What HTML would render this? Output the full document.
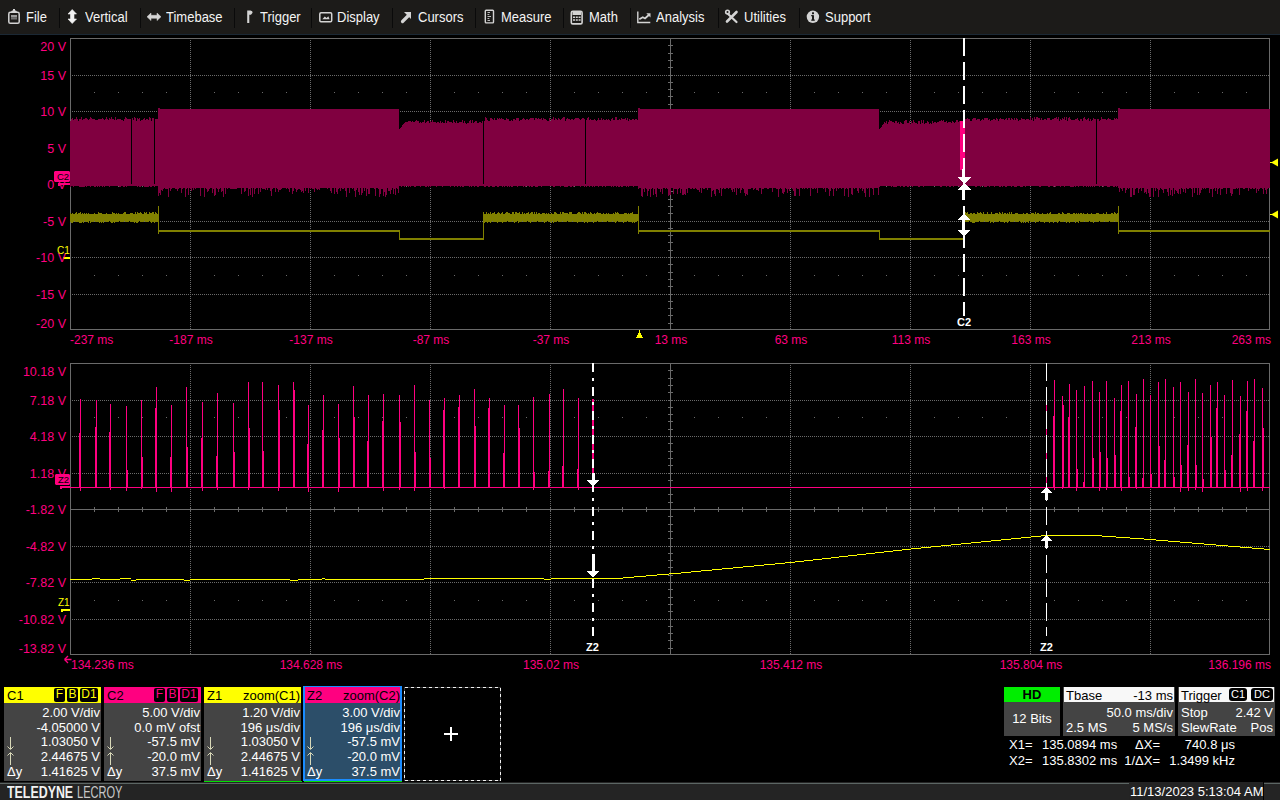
<!DOCTYPE html>
<html><head><meta charset="utf-8"><style>
html,body{margin:0;padding:0;width:1280px;height:800px;overflow:hidden;background:#000;font-family:"Liberation Sans", sans-serif;}
div{font-family:"Liberation Sans", sans-serif;}
</style></head><body>
<div style="position:absolute;left:0;top:0;width:1280px;height:34px;background:#1c1b19"></div><div style="position:absolute;left:0;top:34px;width:1280px;height:1px;background:#1b2834"></div><div style="position:absolute;left:59px;top:8px;width:1px;height:20px;background:#0a0a0a"></div><div style="position:absolute;left:140px;top:8px;width:1px;height:20px;background:#0a0a0a"></div><div style="position:absolute;left:234px;top:8px;width:1px;height:20px;background:#0a0a0a"></div><div style="position:absolute;left:311px;top:8px;width:1px;height:20px;background:#0a0a0a"></div><div style="position:absolute;left:392px;top:8px;width:1px;height:20px;background:#0a0a0a"></div><div style="position:absolute;left:475px;top:8px;width:1px;height:20px;background:#0a0a0a"></div><div style="position:absolute;left:563px;top:8px;width:1px;height:20px;background:#0a0a0a"></div><div style="position:absolute;left:630px;top:8px;width:1px;height:20px;background:#0a0a0a"></div><div style="position:absolute;left:718px;top:8px;width:1px;height:20px;background:#0a0a0a"></div><div style="position:absolute;left:799px;top:8px;width:1px;height:20px;background:#0a0a0a"></div><div style="position:absolute;left:26px;top:10px;font-size:13px;line-height:14px;color:#f4f4f4;transform:scaleY(1.1);transform-origin:0 1px">File</div><div style="position:absolute;left:85px;top:10px;font-size:13px;line-height:14px;color:#f4f4f4;transform:scaleY(1.1);transform-origin:0 1px">Vertical</div><div style="position:absolute;left:166px;top:10px;font-size:13px;line-height:14px;color:#f4f4f4;transform:scaleY(1.1);transform-origin:0 1px">Timebase</div><div style="position:absolute;left:260px;top:10px;font-size:13px;line-height:14px;color:#f4f4f4;transform:scaleY(1.1);transform-origin:0 1px">Trigger</div><div style="position:absolute;left:337px;top:10px;font-size:13px;line-height:14px;color:#f4f4f4;transform:scaleY(1.1);transform-origin:0 1px">Display</div><div style="position:absolute;left:418px;top:10px;font-size:13px;line-height:14px;color:#f4f4f4;transform:scaleY(1.1);transform-origin:0 1px">Cursors</div><div style="position:absolute;left:501px;top:10px;font-size:13px;line-height:14px;color:#f4f4f4;transform:scaleY(1.1);transform-origin:0 1px">Measure</div><div style="position:absolute;left:589px;top:10px;font-size:13px;line-height:14px;color:#f4f4f4;transform:scaleY(1.1);transform-origin:0 1px">Math</div><div style="position:absolute;left:656px;top:10px;font-size:13px;line-height:14px;color:#f4f4f4;transform:scaleY(1.1);transform-origin:0 1px">Analysis</div><div style="position:absolute;left:744px;top:10px;font-size:13px;line-height:14px;color:#f4f4f4;transform:scaleY(1.1);transform-origin:0 1px">Utilities</div><div style="position:absolute;left:825px;top:10px;font-size:13px;line-height:14px;color:#f4f4f4;transform:scaleY(1.1);transform-origin:0 1px">Support</div>

<svg width="900" height="34" style="position:absolute;left:0;top:0">
 <rect x="8.8" y="12.3" width="10.4" height="11" rx="1.6" fill="none" stroke="#d4d4d4" stroke-width="1.5"/>
 <path d="M10.5 12.5L12 10.5H13V9H15V10.5H16L17.5 12.5Z" fill="#d4d4d4"/>
 <rect x="11" y="15" width="6" height="2.5" fill="#9a9a9a"/>
 <rect x="11" y="17.5" width="6" height="2" fill="#707070"/>
 <path d="M72.2 9.5L76.5 14H74V19H76.5L72.2 23.5L68 19H70.5V14H68Z" fill="#f2f2f2" stroke="#f2f2f2" stroke-width="0.6" stroke-linejoin="round"/>
 <path d="M147 16.8L151 13V15.3H157V13L161 16.8L157 20.6V18.3H151V20.6Z" fill="#d4d4d4" stroke="#d4d4d4" stroke-width="0.5" stroke-linejoin="round"/>
 <path d="M247.2 10.5H250.5Q252.8 10.8 252.6 12.8L251 14.8H249.3V23H247.2Z" fill="#d4d4d4"/>
 <rect x="319.8" y="12.8" width="11.9" height="8.9" rx="1.2" fill="none" stroke="#d4d4d4" stroke-width="1.5"/>
 <path d="M322.3 19.3L324.8 16.6L326.6 18L328.3 16.3L329.6 19.3Z" fill="#d4d4d4"/>
 <path d="M402.5 21.5L408 16" stroke="#d4d4d4" stroke-width="3.2" stroke-linecap="round"/>
 <path d="M404 12H411V19Z" fill="#d4d4d4"/>
 <rect x="485.3" y="10.3" width="8.2" height="12.6" rx="0.8" fill="none" stroke="#d4d4d4" stroke-width="1.4"/>
 <path d="M487.5 12.5h2.5M487.5 14.5h1.8M487.5 16.5h3.5M487.5 18.5h1.8M487.5 20.5h2.5" stroke="#bdbdbd" stroke-width="1"/>
 <rect x="571.3" y="11.3" width="10.8" height="12.6" rx="1.5" fill="none" stroke="#d4d4d4" stroke-width="1.6"/>
 <rect x="572.5" y="12" width="8.5" height="3" fill="#d4d4d4"/>
 <path d="M573 16.5h2v1.6h-2zM575.8 16.5h2v1.6h-2zM578.6 16.5h2v1.6h-2zM573 19.2h2v1.6h-2zM575.8 19.2h2v1.6h-2zM578.6 19.2h2v1.6h-2z" fill="#d4d4d4"/>
 <path d="M637.8 11.5v11h12.5" fill="none" stroke="#d4d4d4" stroke-width="1.4"/>
 <path d="M639.3 19.3L642.8 17.3L645 18.5L648.8 15" fill="none" stroke="#d4d4d4" stroke-width="1.8"/>
 <path d="M646.3 13.3H650.5V17.5Z" fill="#d4d4d4"/>
 <path d="M727 21.5L736.5 12" stroke="#d4d4d4" stroke-width="2.6" stroke-linecap="round"/>
 <path d="M726.5 12.5L736.5 22" stroke="#d4d4d4" stroke-width="2.2" stroke-linecap="round"/>
 <circle cx="727.5" cy="12" r="2.6" fill="#d4d4d4"/>
 <circle cx="727.5" cy="12" r="1" fill="#1c1b19"/>
 <circle cx="812.9" cy="16.8" r="6.2" fill="#d4d4d4"/>
 <rect x="812" y="15.2" width="2" height="5.3" fill="#1c1b19"/>
 <rect x="811" y="15.2" width="2" height="1" fill="#1c1b19"/>
 <rect x="811" y="19.6" width="4" height="1" fill="#1c1b19"/>
 <rect x="812" y="12.3" width="2" height="1.9" fill="#1c1b19"/>
</svg>
<svg width="1280" height="800" style="position:absolute;left:0;top:0" shape-rendering="crispEdges"><rect x="70.5" y="38.5" width="1199" height="291" fill="none" stroke="#6a6a6a" stroke-width="1"/>
<line x1="190.5" y1="40" x2="190.5" y2="329" stroke="#6a6a6a" stroke-dasharray="1 1"/>
<line x1="310.5" y1="40" x2="310.5" y2="329" stroke="#6a6a6a" stroke-dasharray="1 1"/>
<line x1="430.5" y1="40" x2="430.5" y2="329" stroke="#6a6a6a" stroke-dasharray="1 1"/>
<line x1="550.5" y1="40" x2="550.5" y2="329" stroke="#6a6a6a" stroke-dasharray="1 1"/>
<line x1="790.5" y1="40" x2="790.5" y2="329" stroke="#6a6a6a" stroke-dasharray="1 1"/>
<line x1="910.5" y1="40" x2="910.5" y2="329" stroke="#6a6a6a" stroke-dasharray="1 1"/>
<line x1="1030.5" y1="40" x2="1030.5" y2="329" stroke="#6a6a6a" stroke-dasharray="1 1"/>
<line x1="1150.5" y1="40" x2="1150.5" y2="329" stroke="#6a6a6a" stroke-dasharray="1 1"/>
<line x1="72" y1="38.5" x2="1269" y2="38.5" stroke="#6a6a6a" stroke-dasharray="1 1"/>
<line x1="72" y1="75.5" x2="1269" y2="75.5" stroke="#6a6a6a" stroke-dasharray="1 1"/>
<line x1="72" y1="111.5" x2="1269" y2="111.5" stroke="#6a6a6a" stroke-dasharray="1 1"/>
<line x1="72" y1="148.5" x2="1269" y2="148.5" stroke="#6a6a6a" stroke-dasharray="1 1"/>
<line x1="72" y1="221.5" x2="1269" y2="221.5" stroke="#6a6a6a" stroke-dasharray="1 1"/>
<line x1="72" y1="257.5" x2="1269" y2="257.5" stroke="#6a6a6a" stroke-dasharray="1 1"/>
<line x1="72" y1="294.5" x2="1269" y2="294.5" stroke="#6a6a6a" stroke-dasharray="1 1"/>
<line x1="72" y1="329.5" x2="1269" y2="329.5" stroke="#6a6a6a" stroke-dasharray="1 1"/>
<path d="M94 92h1v1h-1zM118 92h1v1h-1zM142 92h1v1h-1zM166 92h1v1h-1zM214 92h1v1h-1zM238 92h1v1h-1zM262 92h1v1h-1zM286 92h1v1h-1zM334 92h1v1h-1zM358 92h1v1h-1zM382 92h1v1h-1zM406 92h1v1h-1zM454 92h1v1h-1zM478 92h1v1h-1zM502 92h1v1h-1zM526 92h1v1h-1zM574 92h1v1h-1zM598 92h1v1h-1zM622 92h1v1h-1zM646 92h1v1h-1zM694 92h1v1h-1zM718 92h1v1h-1zM742 92h1v1h-1zM766 92h1v1h-1zM814 92h1v1h-1zM838 92h1v1h-1zM862 92h1v1h-1zM886 92h1v1h-1zM934 92h1v1h-1zM958 92h1v1h-1zM982 92h1v1h-1zM1006 92h1v1h-1zM1054 92h1v1h-1zM1078 92h1v1h-1zM1102 92h1v1h-1zM1126 92h1v1h-1zM1174 92h1v1h-1zM1198 92h1v1h-1zM1222 92h1v1h-1zM1246 92h1v1h-1z" fill="#6a6a6a"/>
<path d="M94 275h1v1h-1zM118 275h1v1h-1zM142 275h1v1h-1zM166 275h1v1h-1zM214 275h1v1h-1zM238 275h1v1h-1zM262 275h1v1h-1zM286 275h1v1h-1zM334 275h1v1h-1zM358 275h1v1h-1zM382 275h1v1h-1zM406 275h1v1h-1zM454 275h1v1h-1zM478 275h1v1h-1zM502 275h1v1h-1zM526 275h1v1h-1zM574 275h1v1h-1zM598 275h1v1h-1zM622 275h1v1h-1zM646 275h1v1h-1zM694 275h1v1h-1zM718 275h1v1h-1zM742 275h1v1h-1zM766 275h1v1h-1zM814 275h1v1h-1zM838 275h1v1h-1zM862 275h1v1h-1zM886 275h1v1h-1zM934 275h1v1h-1zM958 275h1v1h-1zM982 275h1v1h-1zM1006 275h1v1h-1zM1054 275h1v1h-1zM1078 275h1v1h-1zM1102 275h1v1h-1zM1126 275h1v1h-1zM1174 275h1v1h-1zM1198 275h1v1h-1zM1222 275h1v1h-1zM1246 275h1v1h-1z" fill="#6a6a6a"/>
<rect x="670" y="38" width="1" height="291" fill="#6a6a6a"/>
<path d="M668 45h5v1h-5zM668 53h5v1h-5zM668 60h5v1h-5zM668 67h5v1h-5zM668 75h5v1h-5zM668 82h5v1h-5zM668 89h5v1h-5zM668 96h5v1h-5zM668 104h5v1h-5zM668 111h5v1h-5zM668 118h5v1h-5zM668 126h5v1h-5zM668 133h5v1h-5zM668 140h5v1h-5zM668 148h5v1h-5zM668 155h5v1h-5zM668 162h5v1h-5zM668 169h5v1h-5zM668 177h5v1h-5zM668 184h5v1h-5zM668 191h5v1h-5zM668 199h5v1h-5zM668 206h5v1h-5zM668 213h5v1h-5zM668 221h5v1h-5zM668 228h5v1h-5zM668 235h5v1h-5zM668 242h5v1h-5zM668 250h5v1h-5zM668 257h5v1h-5zM668 264h5v1h-5zM668 272h5v1h-5zM668 279h5v1h-5zM668 286h5v1h-5zM668 294h5v1h-5zM668 301h5v1h-5zM668 308h5v1h-5zM668 315h5v1h-5zM668 323h5v1h-5z" fill="#6a6a6a"/>
<rect x="70" y="184" width="1199" height="1" fill="#6a6a6a"/>
<path d="M94 182h1v5h-1zM118 182h1v5h-1zM142 182h1v5h-1zM166 182h1v5h-1zM190 182h1v5h-1zM214 182h1v5h-1zM238 182h1v5h-1zM262 182h1v5h-1zM286 182h1v5h-1zM310 182h1v5h-1zM334 182h1v5h-1zM358 182h1v5h-1zM382 182h1v5h-1zM406 182h1v5h-1zM430 182h1v5h-1zM454 182h1v5h-1zM478 182h1v5h-1zM502 182h1v5h-1zM526 182h1v5h-1zM550 182h1v5h-1zM574 182h1v5h-1zM598 182h1v5h-1zM622 182h1v5h-1zM646 182h1v5h-1zM670 182h1v5h-1zM694 182h1v5h-1zM718 182h1v5h-1zM742 182h1v5h-1zM766 182h1v5h-1zM790 182h1v5h-1zM814 182h1v5h-1zM838 182h1v5h-1zM862 182h1v5h-1zM886 182h1v5h-1zM910 182h1v5h-1zM934 182h1v5h-1zM958 182h1v5h-1zM982 182h1v5h-1zM1006 182h1v5h-1zM1030 182h1v5h-1zM1054 182h1v5h-1zM1078 182h1v5h-1zM1102 182h1v5h-1zM1126 182h1v5h-1zM1150 182h1v5h-1zM1174 182h1v5h-1zM1198 182h1v5h-1zM1222 182h1v5h-1zM1246 182h1v5h-1z" fill="#6a6a6a"/>
<rect x="70.5" y="363.5" width="1199" height="291" fill="none" stroke="#6a6a6a" stroke-width="1"/>
<line x1="190.5" y1="365" x2="190.5" y2="654" stroke="#6a6a6a" stroke-dasharray="1 1"/>
<line x1="310.5" y1="365" x2="310.5" y2="654" stroke="#6a6a6a" stroke-dasharray="1 1"/>
<line x1="430.5" y1="365" x2="430.5" y2="654" stroke="#6a6a6a" stroke-dasharray="1 1"/>
<line x1="550.5" y1="365" x2="550.5" y2="654" stroke="#6a6a6a" stroke-dasharray="1 1"/>
<line x1="790.5" y1="365" x2="790.5" y2="654" stroke="#6a6a6a" stroke-dasharray="1 1"/>
<line x1="910.5" y1="365" x2="910.5" y2="654" stroke="#6a6a6a" stroke-dasharray="1 1"/>
<line x1="1030.5" y1="365" x2="1030.5" y2="654" stroke="#6a6a6a" stroke-dasharray="1 1"/>
<line x1="1150.5" y1="365" x2="1150.5" y2="654" stroke="#6a6a6a" stroke-dasharray="1 1"/>
<line x1="72" y1="363.5" x2="1269" y2="363.5" stroke="#6a6a6a" stroke-dasharray="1 1"/>
<line x1="72" y1="400.5" x2="1269" y2="400.5" stroke="#6a6a6a" stroke-dasharray="1 1"/>
<line x1="72" y1="436.5" x2="1269" y2="436.5" stroke="#6a6a6a" stroke-dasharray="1 1"/>
<line x1="72" y1="473.5" x2="1269" y2="473.5" stroke="#6a6a6a" stroke-dasharray="1 1"/>
<line x1="72" y1="546.5" x2="1269" y2="546.5" stroke="#6a6a6a" stroke-dasharray="1 1"/>
<line x1="72" y1="582.5" x2="1269" y2="582.5" stroke="#6a6a6a" stroke-dasharray="1 1"/>
<line x1="72" y1="619.5" x2="1269" y2="619.5" stroke="#6a6a6a" stroke-dasharray="1 1"/>
<line x1="72" y1="654.5" x2="1269" y2="654.5" stroke="#6a6a6a" stroke-dasharray="1 1"/>
<path d="M94 417h1v1h-1zM118 417h1v1h-1zM142 417h1v1h-1zM166 417h1v1h-1zM214 417h1v1h-1zM238 417h1v1h-1zM262 417h1v1h-1zM286 417h1v1h-1zM334 417h1v1h-1zM358 417h1v1h-1zM382 417h1v1h-1zM406 417h1v1h-1zM454 417h1v1h-1zM478 417h1v1h-1zM502 417h1v1h-1zM526 417h1v1h-1zM574 417h1v1h-1zM598 417h1v1h-1zM622 417h1v1h-1zM646 417h1v1h-1zM694 417h1v1h-1zM718 417h1v1h-1zM742 417h1v1h-1zM766 417h1v1h-1zM814 417h1v1h-1zM838 417h1v1h-1zM862 417h1v1h-1zM886 417h1v1h-1zM934 417h1v1h-1zM958 417h1v1h-1zM982 417h1v1h-1zM1006 417h1v1h-1zM1054 417h1v1h-1zM1078 417h1v1h-1zM1102 417h1v1h-1zM1126 417h1v1h-1zM1174 417h1v1h-1zM1198 417h1v1h-1zM1222 417h1v1h-1zM1246 417h1v1h-1z" fill="#6a6a6a"/>
<path d="M94 600h1v1h-1zM118 600h1v1h-1zM142 600h1v1h-1zM166 600h1v1h-1zM214 600h1v1h-1zM238 600h1v1h-1zM262 600h1v1h-1zM286 600h1v1h-1zM334 600h1v1h-1zM358 600h1v1h-1zM382 600h1v1h-1zM406 600h1v1h-1zM454 600h1v1h-1zM478 600h1v1h-1zM502 600h1v1h-1zM526 600h1v1h-1zM574 600h1v1h-1zM598 600h1v1h-1zM622 600h1v1h-1zM646 600h1v1h-1zM694 600h1v1h-1zM718 600h1v1h-1zM742 600h1v1h-1zM766 600h1v1h-1zM814 600h1v1h-1zM838 600h1v1h-1zM862 600h1v1h-1zM886 600h1v1h-1zM934 600h1v1h-1zM958 600h1v1h-1zM982 600h1v1h-1zM1006 600h1v1h-1zM1054 600h1v1h-1zM1078 600h1v1h-1zM1102 600h1v1h-1zM1126 600h1v1h-1zM1174 600h1v1h-1zM1198 600h1v1h-1zM1222 600h1v1h-1zM1246 600h1v1h-1z" fill="#6a6a6a"/>
<rect x="670" y="363" width="1" height="291" fill="#6a6a6a"/>
<path d="M668 370h5v1h-5zM668 378h5v1h-5zM668 385h5v1h-5zM668 392h5v1h-5zM668 400h5v1h-5zM668 407h5v1h-5zM668 414h5v1h-5zM668 421h5v1h-5zM668 429h5v1h-5zM668 436h5v1h-5zM668 443h5v1h-5zM668 451h5v1h-5zM668 458h5v1h-5zM668 465h5v1h-5zM668 473h5v1h-5zM668 480h5v1h-5zM668 487h5v1h-5zM668 494h5v1h-5zM668 502h5v1h-5zM668 509h5v1h-5zM668 516h5v1h-5zM668 524h5v1h-5zM668 531h5v1h-5zM668 538h5v1h-5zM668 546h5v1h-5zM668 553h5v1h-5zM668 560h5v1h-5zM668 567h5v1h-5zM668 575h5v1h-5zM668 582h5v1h-5zM668 589h5v1h-5zM668 597h5v1h-5zM668 604h5v1h-5zM668 611h5v1h-5zM668 619h5v1h-5zM668 626h5v1h-5zM668 633h5v1h-5zM668 640h5v1h-5zM668 648h5v1h-5z" fill="#6a6a6a"/>
<rect x="70" y="509" width="1199" height="1" fill="#6a6a6a"/>
<path d="M94 507h1v5h-1zM118 507h1v5h-1zM142 507h1v5h-1zM166 507h1v5h-1zM190 507h1v5h-1zM214 507h1v5h-1zM238 507h1v5h-1zM262 507h1v5h-1zM286 507h1v5h-1zM310 507h1v5h-1zM334 507h1v5h-1zM358 507h1v5h-1zM382 507h1v5h-1zM406 507h1v5h-1zM430 507h1v5h-1zM454 507h1v5h-1zM478 507h1v5h-1zM502 507h1v5h-1zM526 507h1v5h-1zM550 507h1v5h-1zM574 507h1v5h-1zM598 507h1v5h-1zM622 507h1v5h-1zM646 507h1v5h-1zM670 507h1v5h-1zM694 507h1v5h-1zM718 507h1v5h-1zM742 507h1v5h-1zM766 507h1v5h-1zM790 507h1v5h-1zM814 507h1v5h-1zM838 507h1v5h-1zM862 507h1v5h-1zM886 507h1v5h-1zM910 507h1v5h-1zM934 507h1v5h-1zM958 507h1v5h-1zM982 507h1v5h-1zM1006 507h1v5h-1zM1030 507h1v5h-1zM1054 507h1v5h-1zM1078 507h1v5h-1zM1102 507h1v5h-1zM1126 507h1v5h-1zM1150 507h1v5h-1zM1174 507h1v5h-1zM1198 507h1v5h-1zM1222 507h1v5h-1zM1246 507h1v5h-1z" fill="#6a6a6a"/>
<path d="M70 121H70V121H71V119H72V118H73V120H74V119H75V119H76V117H77V119H78V121H79V119H80V119H81V117H82V120H83V119H84V119H85V118H86V118H87V119H88V120H89V119H90V117H91V118H92V119H93V119H94V119H95V120H96V120H97V120H98V119H99V119H100V119H101V119H102V118H103V119H104V120H105V119H106V117H107V119H108V120H109V118H110V119H111V117H112V119H113V119H114V120H115V117H116V120H117V119H118V119H119V119H120V119H121V120H122V120H123V121H124V119H125V117H126V118H127V119H128V119H129V119H130V119H131V120H132V118H133V120H134V117H135V118H136V121H137V118H138V119H139V118H140V121H141V120H142V120H143V119H144V118H145V120H146V119H147V119H148V120H149V117H150V118H151V121H152V118H153V118H154V120H155V119H156V119H157V119H158V186H158V186H157V186H156V186H155V187H154V186H153V186H152V187H151V187H150V186H149V187H148V187H147V187H146V187H145V187H144V186H143V186H142V186H141V187H140V187H139V186H138V187H137V186H136V186H135V186H134V186H133V186H132V186H131V186H130V186H129V186H128V186H127V187H126V186H125V187H124V187H123V186H122V186H121V187H120V187H119V186H118V186H117V186H116V186H115V186H114V186H113V186H112V186H111V186H110V187H109V186H108V186H107V186H106V186H105V187H104V186H103V187H102V186H101V186H100V187H99V186H98V187H97V186H96V187H95V187H94V186H93V186H92V186H91V187H90V186H89V186H88V186H87V187H86V186H85V187H84V187H83V187H82V187H81V187H80V187H79V186H78V186H77V186H76V186H75V186H74V187H73V186H72V186H71V187H70Z" fill="#800040"/>
<path d="M158 108H158V108H159V108H160V109H161V109H162V109H163V109H164V109H165V109H166V109H167V109H168V109H169V109H170V109H171V109H172V109H173V109H174V109H175V109H176V109H177V109H178V109H179V109H180V109H181V109H182V109H183V109H184V109H185V109H186V109H187V109H188V109H189V109H190V109H191V109H192V109H193V109H194V109H195V109H196V109H197V109H198V109H199V109H200V109H201V109H202V109H203V109H204V109H205V109H206V109H207V109H208V109H209V109H210V109H211V109H212V109H213V109H214V109H215V109H216V109H217V109H218V109H219V109H220V109H221V109H222V109H223V109H224V109H225V109H226V109H227V109H228V109H229V109H230V109H231V109H232V109H233V109H234V109H235V109H236V109H237V109H238V109H239V109H240V109H241V109H242V109H243V109H244V109H245V109H246V109H247V109H248V109H249V109H250V109H251V109H252V109H253V109H254V109H255V109H256V109H257V109H258V109H259V109H260V109H261V109H262V109H263V109H264V109H265V109H266V109H267V109H268V109H269V109H270V109H271V109H272V109H273V109H274V109H275V109H276V109H277V109H278V109H279V109H280V109H281V109H282V109H283V109H284V109H285V109H286V109H287V109H288V109H289V109H290V109H291V109H292V109H293V109H294V109H295V109H296V109H297V109H298V109H299V109H300V109H301V109H302V109H303V109H304V109H305V109H306V109H307V109H308V109H309V109H310V109H311V109H312V109H313V109H314V109H315V109H316V109H317V109H318V109H319V109H320V109H321V109H322V109H323V109H324V109H325V109H326V109H327V109H328V109H329V109H330V109H331V109H332V109H333V109H334V109H335V109H336V109H337V109H338V109H339V109H340V109H341V109H342V109H343V109H344V109H345V109H346V109H347V109H348V109H349V109H350V109H351V109H352V109H353V109H354V109H355V109H356V109H357V109H358V109H359V109H360V109H361V109H362V109H363V109H364V109H365V109H366V109H367V109H368V109H369V109H370V109H371V109H372V109H373V109H374V109H375V109H376V109H377V109H378V109H379V109H380V109H381V109H382V109H383V109H384V109H385V109H386V109H387V109H388V109H389V109H390V109H391V109H392V109H393V109H394V109H395V109H396V109H397V109H398V109H399V193H399V193H398V189H397V188H396V195H395V189H394V194H393V188H392V190H391V194H390V191H389V191H388V188H387V195H386V197H385V192H384V196H383V189H382V189H381V194H380V197H379V189H378V188H377V188H376V196H375V189H374V188H373V188H372V188H371V188H370V194H369V194H368V189H367V196H366V188H365V191H364V188H363V193H362V195H361V188H360V195H359V192H358V188H357V190H356V197H355V191H354V188H353V189H352V188H351V188H350V193H349V188H348V188H347V197H346V191H345V188H344V189H343V189H342V188H341V191H340V188H339V189H338V194H337V192H336V188H335V194H334V188H333V188H332V193H331V191H330V188H329V188H328V189H327V188H326V188H325V188H324V188H323V188H322V188H321V188H320V190H319V189H318V190H317V189H316V188H315V192H314V189H313V189H312V188H311V189H310V188H309V193H308V188H307V188H306V191H305V188H304V193H303V191H302V192H301V190H300V189H299V189H298V190H297V192H296V189H295V188H294V191H293V194H292V188H291V188H290V192H289V189H288V188H287V189H286V188H285V188H284V188H283V188H282V189H281V190H280V190H279V192H278V189H277V188H276V192H275V188H274V188H273V189H272V196H271V191H270V188H269V188H268V190H267V188H266V190H265V189H264V189H263V189H262V188H261V192H260V188H259V194H258V188H257V188H256V189H255V194H254V188H253V197H252V188H251V195H250V189H249V196H248V188H247V188H246V191H245V192H244V188H243V188H242V194H241V188H240V188H239V188H238V188H237V189H236V189H235V189H234V189H233V189H232V189H231V189H230V188H229V188H228V189H227V188H226V194H225V188H224V197H223V191H222V192H221V188H220V189H219V192H218V189H217V188H216V195H215V196H214V189H213V193H212V188H211V188H210V189H209V191H208V192H207V189H206V188H205V197H204V188H203V188H202V188H201V196H200V188H199V188H198V188H197V188H196V189H195V188H194V190H193V188H192V191H191V189H190V188H189V195H188V188H187V189H186V197H185V188H184V188H183V189H182V193H181V188H180V188H179V189H178V191H177V189H176V189H175V188H174V188H173V188H172V189H171V191H170V188H169V197H168V189H167V189H166V189H165V188H164V189H163V191H162V190H161V195H160V193H159V196H158Z" fill="#800040"/>
<path d="M399 129H399V129H400V128H401V127H402V125H403V124H404V123H405V122H406V122H407V122H408V121H409V121H410V121H411V122H412V121H413V122H414V122H415V121H416V120H417V121H418V121H419V123H420V122H421V123H422V122H423V122H424V120H425V123H426V122H427V121H428V121H429V123H430V121H431V122H432V120H433V122H434V122H435V122H436V123H437V122H438V122H439V123H440V121H441V123H442V122H443V123H444V123H445V120H446V123H447V121H448V121H449V122H450V122H451V122H452V123H453V120H454V122H455V123H456V121H457V123H458V123H459V122H460V122H461V122H462V120H463V123H464V121H465V123H466V124H467V123H468V123H469V121H470V120H471V123H472V120H473V123H474V122H475V121H476V121H477V123H478V123H479V122H480V122H481V123H482V121H483V186H483V186H482V186H481V186H480V186H479V187H478V187H477V186H476V186H475V187H474V186H473V186H472V187H471V186H470V187H469V186H468V186H467V186H466V186H465V186H464V187H463V187H462V186H461V187H460V186H459V186H458V187H457V186H456V186H455V187H454V186H453V186H452V186H451V187H450V186H449V186H448V186H447V186H446V186H445V186H444V186H443V187H442V186H441V186H440V186H439V186H438V186H437V187H436V186H435V186H434V186H433V186H432V186H431V187H430V186H429V187H428V186H427V187H426V187H425V186H424V186H423V186H422V186H421V187H420V186H419V186H418V186H417V186H416V187H415V187H414V186H413V186H412V186H411V187H410V186H409V187H408V186H407V186H406V186H405V187H404V186H403V186H402V187H401V186H400V186H399Z" fill="#800040"/>
<path d="M483 120H483V120H484V121H485V117H486V118H487V120H488V121H489V121H490V118H491V118H492V119H493V120H494V118H495V120H496V120H497V118H498V119H499V118H500V119H501V118H502V119H503V119H504V120H505V120H506V118H507V119H508V119H509V121H510V121H511V120H512V121H513V119H514V119H515V120H516V118H517V118H518V118H519V121H520V120H521V120H522V119H523V118H524V119H525V120H526V119H527V119H528V120H529V119H530V118H531V118H532V118H533V118H534V120H535V118H536V118H537V119H538V118H539V119H540V119H541V118H542V120H543V118H544V119H545V119H546V120H547V121H548V121H549V118H550V121H551V119H552V119H553V117H554V120H555V118H556V119H557V120H558V118H559V119H560V120H561V119H562V118H563V117H564V117H565V121H566V119H567V118H568V119H569V119H570V120H571V119H572V119H573V120H574V119H575V118H576V118H577V118H578V118H579V119H580V120H581V119H582V118H583V118H584V119H585V120H586V120H587V118H588V117H589V120H590V119H591V120H592V120H593V120H594V119H595V120H596V121H597V120H598V118H599V120H600V120H601V118H602V120H603V119H604V120H605V120H606V119H607V120H608V119H609V120H610V121H611V119H612V118H613V120H614V120H615V117H616V117H617V120H618V120H619V119H620V120H621V118H622V119H623V119H624V119H625V118H626V120H627V118H628V121H629V119H630V120H631V120H632V119H633V119H634V120H635V119H636V119H637V120H638V186H638V186H637V186H636V186H635V186H634V187H633V186H632V186H631V186H630V186H629V187H628V186H627V187H626V186H625V186H624V186H623V187H622V187H621V186H620V187H619V187H618V186H617V187H616V186H615V186H614V187H613V186H612V187H611V186H610V186H609V186H608V186H607V186H606V187H605V186H604V186H603V187H602V186H601V186H600V186H599V187H598V186H597V186H596V186H595V187H594V186H593V187H592V186H591V186H590V187H589V186H588V186H587V187H586V186H585V187H584V186H583V186H582V186H581V187H580V186H579V186H578V186H577V186H576V186H575V186H574V187H573V186H572V187H571V187H570V186H569V186H568V187H567V187H566V187H565V187H564V186H563V186H562V186H561V187H560V186H559V186H558V186H557V186H556V186H555V187H554V187H553V186H552V186H551V186H550V186H549V186H548V186H547V186H546V186H545V186H544V186H543V186H542V187H541V186H540V186H539V186H538V187H537V187H536V187H535V186H534V186H533V187H532V187H531V186H530V187H529V186H528V186H527V186H526V187H525V186H524V187H523V186H522V186H521V186H520V186H519V186H518V187H517V186H516V186H515V186H514V186H513V187H512V187H511V186H510V187H509V186H508V187H507V186H506V186H505V187H504V186H503V187H502V186H501V186H500V186H499V187H498V187H497V186H496V186H495V187H494V187H493V187H492V186H491V186H490V187H489V187H488V186H487V186H486V187H485V187H484V186H483Z" fill="#800040"/>
<path d="M638 108H638V108H639V108H640V109H641V109H642V109H643V109H644V109H645V109H646V109H647V109H648V109H649V109H650V109H651V109H652V109H653V109H654V109H655V109H656V109H657V109H658V109H659V109H660V109H661V109H662V109H663V109H664V109H665V109H666V109H667V109H668V109H669V109H670V109H671V109H672V109H673V109H674V109H675V109H676V109H677V109H678V109H679V109H680V109H681V109H682V109H683V109H684V109H685V109H686V109H687V109H688V109H689V109H690V109H691V109H692V109H693V109H694V109H695V109H696V109H697V109H698V109H699V109H700V109H701V109H702V109H703V109H704V109H705V109H706V109H707V109H708V109H709V109H710V109H711V109H712V109H713V109H714V109H715V109H716V109H717V109H718V109H719V109H720V109H721V109H722V109H723V109H724V109H725V109H726V109H727V109H728V109H729V109H730V109H731V109H732V109H733V109H734V109H735V109H736V109H737V109H738V109H739V109H740V109H741V109H742V109H743V109H744V109H745V109H746V109H747V109H748V109H749V109H750V109H751V109H752V109H753V109H754V109H755V109H756V109H757V109H758V109H759V109H760V109H761V109H762V109H763V109H764V109H765V109H766V109H767V109H768V109H769V109H770V109H771V109H772V109H773V109H774V109H775V109H776V109H777V109H778V109H779V109H780V109H781V109H782V109H783V109H784V109H785V109H786V109H787V109H788V109H789V109H790V109H791V109H792V109H793V109H794V109H795V109H796V109H797V109H798V109H799V109H800V109H801V109H802V109H803V109H804V109H805V109H806V109H807V109H808V109H809V109H810V109H811V109H812V109H813V109H814V109H815V109H816V109H817V109H818V109H819V109H820V109H821V109H822V109H823V109H824V109H825V109H826V109H827V109H828V109H829V109H830V109H831V109H832V109H833V109H834V109H835V109H836V109H837V109H838V109H839V109H840V109H841V109H842V109H843V109H844V109H845V109H846V109H847V109H848V109H849V109H850V109H851V109H852V109H853V109H854V109H855V109H856V109H857V109H858V109H859V109H860V109H861V109H862V109H863V109H864V109H865V109H866V109H867V109H868V109H869V109H870V109H871V109H872V109H873V109H874V109H875V109H876V109H877V109H878V109H879V195H879V195H878V188H877V188H876V188H875V188H874V195H873V189H872V188H871V188H870V197H869V188H868V189H867V188H866V197H865V193H864V189H863V191H862V188H861V189H860V188H859V193H858V191H857V188H856V188H855V189H854V188H853V195H852V194H851V188H850V188H849V197H848V189H847V188H846V189H845V196H844V188H843V188H842V189H841V188H840V188H839V189H838V188H837V191H836V188H835V189H834V196H833V189H832V188H831V191H830V196H829V189H828V188H827V188H826V192H825V188H824V189H823V188H822V188H821V188H820V188H819V188H818V193H817V188H816V189H815V188H814V189H813V189H812V188H811V196H810V188H809V188H808V189H807V188H806V188H805V189H804V188H803V189H802V188H801V188H800V196H799V189H798V189H797V188H796V196H795V196H794V191H793V189H792V188H791V188H790V191H789V189H788V193H787V189H786V188H785V192H784V194H783V193H782V189H781V188H780V189H779V197H778V189H777V189H776V188H775V188H774V188H773V192H772V188H771V188H770V188H769V189H768V189H767V188H766V188H765V188H764V189H763V189H762V194H761V188H760V188H759V191H758V190H757V190H756V188H755V189H754V190H753V188H752V188H751V189H750V189H749V189H748V195H747V194H746V196H745V193H744V189H743V188H742V190H741V193H740V188H739V189H738V188H737V195H736V188H735V192H734V189H733V192H732V190H731V188H730V188H729V189H728V188H727V188H726V189H725V189H724V188H723V189H722V196H721V188H720V193H719V190H718V189H717V189H716V196H715V194H714V190H713V191H712V197H711V188H710V188H709V188H708V190H707V188H706V188H705V189H704V189H703V188H702V193H701V188H700V192H699V190H698V190H697V189H696V188H695V189H694V189H693V188H692V189H691V189H690V188H689V188H688V193H687V189H686V195H685V194H684V195H683V195H682V189H681V193H680V188H679V189H678V194H677V189H676V189H675V189H674V194H673V188H672V188H671V195H670V195H669V196H668V189H667V188H666V189H665V188H664V188H663V194H662V189H661V192H660V189H659V189H658V188H657V197H656V194H655V189H654V195H653V188H652V189H651V197H650V189H649V191H648V196H647V189H646V188H645V192H644V189H643V197H642V196H641V188H640V188H639V189H638Z" fill="#800040"/>
<path d="M879 129H879V129H880V128H881V127H882V125H883V124H884V122H885V123H886V121H887V124H888V122H889V120H890V121H891V121H892V122H893V122H894V123H895V121H896V121H897V123H898V122H899V124H900V122H901V123H902V124H903V124H904V121H905V120H906V120H907V123H908V123H909V121H910V124H911V121H912V123H913V120H914V122H915V123H916V123H917V124H918V121H919V121H920V124H921V120H922V123H923V120H924V124H925V123H926V123H927V121H928V122H929V124H930V123H931V124H932V121H933V123H934V122H935V122H936V123H937V122H938V122H939V121H940V121H941V120H942V121H943V120H944V122H945V122H946V121H947V123H948V122H949V122H950V122H951V123H952V121H953V122H954V123H955V122H956V120H957V120H958V122H959V121H960V122H961V122H962V123H963V187H963V187H962V186H961V186H960V187H959V186H958V186H957V186H956V186H955V186H954V187H953V186H952V186H951V187H950V187H949V186H948V186H947V187H946V186H945V186H944V186H943V186H942V187H941V187H940V186H939V186H938V186H937V186H936V186H935V186H934V186H933V186H932V186H931V186H930V186H929V186H928V186H927V186H926V186H925V186H924V187H923V186H922V186H921V186H920V187H919V187H918V186H917V186H916V186H915V186H914V186H913V187H912V186H911V186H910V186H909V187H908V187H907V186H906V186H905V187H904V187H903V186H902V186H901V187H900V186H899V186H898V186H897V187H896V187H895V187H894V187H893V186H892V187H891V186H890V186H889V186H888V186H887V186H886V186H885V186H884V186H883V186H882V186H881V186H880V187H879Z" fill="#800040"/>
<path d="M963 120H963V120H964V118H965V119H966V119H967V118H968V119H969V119H970V121H971V121H972V119H973V118H974V118H975V118H976V120H977V119H978V119H979V119H980V121H981V120H982V119H983V120H984V118H985V118H986V118H987V118H988V120H989V119H990V121H991V120H992V120H993V119H994V119H995V120H996V118H997V119H998V121H999V119H1000V118H1001V119H1002V119H1003V119H1004V120H1005V119H1006V118H1007V120H1008V118H1009V118H1010V120H1011V118H1012V119H1013V120H1014V118H1015V120H1016V118H1017V119H1018V121H1019V120H1020V120H1021V118H1022V119H1023V119H1024V119H1025V120H1026V119H1027V119H1028V119H1029V120H1030V117H1031V120H1032V118H1033V121H1034V117H1035V119H1036V117H1037V117H1038V118H1039V118H1040V120H1041V118H1042V120H1043V120H1044V119H1045V119H1046V120H1047V118H1048V118H1049V118H1050V120H1051V120H1052V119H1053V119H1054V118H1055V118H1056V117H1057V119H1058V117H1059V121H1060V119H1061V120H1062V118H1063V119H1064V117H1065V120H1066V117H1067V121H1068V118H1069V117H1070V119H1071V120H1072V120H1073V120H1074V120H1075V119H1076V119H1077V118H1078V120H1079V121H1080V119H1081V119H1082V121H1083V118H1084V117H1085V119H1086V120H1087V119H1088V118H1089V121H1090V119H1091V121H1092V120H1093V118H1094V119H1095V119H1096V121H1097V119H1098V119H1099V121H1100V120H1101V117H1102V119H1103V119H1104V119H1105V119H1106V120H1107V119H1108V118H1109V119H1110V119H1111V120H1112V120H1113V120H1114V118H1115V119H1116V118H1117V119H1118V186H1118V186H1117V187H1116V186H1115V187H1114V187H1113V186H1112V186H1111V186H1110V187H1109V187H1108V187H1107V186H1106V186H1105V186H1104V187H1103V186H1102V186H1101V186H1100V187H1099V186H1098V186H1097V186H1096V186H1095V187H1094V186H1093V187H1092V186H1091V187H1090V186H1089V187H1088V186H1087V187H1086V186H1085V186H1084V187H1083V186H1082V186H1081V186H1080V186H1079V187H1078V186H1077V186H1076V187H1075V186H1074V187H1073V187H1072V187H1071V187H1070V186H1069V186H1068V186H1067V186H1066V186H1065V187H1064V186H1063V186H1062V186H1061V187H1060V186H1059V186H1058V186H1057V186H1056V187H1055V186H1054V187H1053V186H1052V186H1051V186H1050V187H1049V187H1048V186H1047V186H1046V186H1045V186H1044V186H1043V186H1042V186H1041V187H1040V187H1039V186H1038V186H1037V186H1036V186H1035V186H1034V186H1033V186H1032V186H1031V186H1030V186H1029V186H1028V186H1027V186H1026V187H1025V186H1024V186H1023V187H1022V187H1021V187H1020V186H1019V186H1018V186H1017V187H1016V187H1015V187H1014V186H1013V186H1012V187H1011V186H1010V186H1009V186H1008V186H1007V187H1006V187H1005V186H1004V186H1003V187H1002V186H1001V187H1000V187H999V186H998V186H997V186H996V186H995V187H994V186H993V186H992V186H991V186H990V187H989V186H988V186H987V187H986V187H985V187H984V186H983V186H982V186H981V187H980V186H979V186H978V186H977V187H976V187H975V186H974V186H973V186H972V186H971V186H970V186H969V186H968V187H967V186H966V187H965V186H964V187H963Z" fill="#800040"/>
<path d="M1118 108H1118V108H1119V108H1120V109H1121V109H1122V109H1123V109H1124V109H1125V109H1126V109H1127V109H1128V109H1129V109H1130V109H1131V109H1132V109H1133V109H1134V109H1135V109H1136V109H1137V109H1138V109H1139V109H1140V109H1141V109H1142V109H1143V109H1144V109H1145V109H1146V109H1147V109H1148V109H1149V109H1150V109H1151V109H1152V109H1153V109H1154V109H1155V109H1156V109H1157V109H1158V109H1159V109H1160V109H1161V109H1162V109H1163V109H1164V109H1165V109H1166V109H1167V109H1168V109H1169V109H1170V109H1171V109H1172V109H1173V109H1174V109H1175V109H1176V109H1177V109H1178V109H1179V109H1180V109H1181V109H1182V109H1183V109H1184V109H1185V109H1186V109H1187V109H1188V109H1189V109H1190V109H1191V109H1192V109H1193V109H1194V109H1195V109H1196V109H1197V109H1198V109H1199V109H1200V109H1201V109H1202V109H1203V109H1204V109H1205V109H1206V109H1207V109H1208V109H1209V109H1210V109H1211V109H1212V109H1213V109H1214V109H1215V109H1216V109H1217V109H1218V109H1219V109H1220V109H1221V109H1222V109H1223V109H1224V109H1225V109H1226V109H1227V109H1228V109H1229V109H1230V109H1231V109H1232V109H1233V109H1234V109H1235V109H1236V109H1237V109H1238V109H1239V109H1240V109H1241V109H1242V109H1243V109H1244V109H1245V109H1246V109H1247V109H1248V109H1249V109H1250V109H1251V109H1252V109H1253V109H1254V109H1255V109H1256V109H1257V109H1258V109H1259V109H1260V109H1261V109H1262V109H1263V109H1264V109H1265V109H1266V109H1267V109H1268V109H1269V109H1270V188H1270V188H1269V188H1268V189H1267V194H1266V190H1265V188H1264V194H1263V189H1262V188H1261V188H1260V189H1259V191H1258V189H1257V193H1256V188H1255V189H1254V189H1253V188H1252V189H1251V189H1250V188H1249V191H1248V188H1247V188H1246V188H1245V189H1244V189H1243V188H1242V188H1241V188H1240V195H1239V188H1238V189H1237V188H1236V189H1235V189H1234V189H1233V194H1232V196H1231V193H1230V188H1229V188H1228V188H1227V194H1226V188H1225V188H1224V188H1223V189H1222V189H1221V195H1220V188H1219V189H1218V194H1217V188H1216V191H1215V188H1214V189H1213V197H1212V189H1211V189H1210V193H1209V188H1208V188H1207V188H1206V189H1205V188H1204V189H1203V188H1202V190H1201V193H1200V195H1199V188H1198V195H1197V188H1196V188H1195V193H1194V188H1193V197H1192V189H1191V188H1190V188H1189V189H1188V189H1187V188H1186V193H1185V189H1184V192H1183V189H1182V188H1181V194H1180V189H1179V194H1178V193H1177V191H1176V190H1175V194H1174V188H1173V196H1172V190H1171V195H1170V188H1169V196H1168V192H1167V189H1166V189H1165V189H1164V193H1163V190H1162V189H1161V188H1160V190H1159V197H1158V189H1157V188H1156V191H1155V188H1154V197H1153V188H1152V188H1151V197H1150V197H1149V193H1148V189H1147V194H1146V192H1145V193H1144V188H1143V188H1142V191H1141V188H1140V189H1139V193H1138V188H1137V188H1136V189H1135V195H1134V195H1133V188H1132V197H1131V197H1130V188H1129V189H1128V188H1127V190H1126V193H1125V188H1124V188H1123V191H1122V189H1121V188H1120V192H1119V188H1118Z" fill="#800040"/>
<rect x="131" y="115" width="1" height="69" fill="#000"/>
<rect x="154" y="115" width="1" height="69" fill="#000"/>
<rect x="483" y="115" width="1" height="69" fill="#000"/>
<rect x="585" y="115" width="1" height="69" fill="#000"/>
<rect x="1096" y="115" width="1" height="69" fill="#000"/>
<rect x="960" y="121" width="5" height="49" fill="#ff0080"/>
<path d="M70 213h1v9h-1zM71 214h1v9h-1zM72 213h1v10h-1zM73 214h1v8h-1zM74 214h1v7h-1zM75 213h1v9h-1zM76 212h1v10h-1zM77 214h1v8h-1zM78 213h1v9h-1zM79 213h1v10h-1zM80 212h1v11h-1zM81 214h1v9h-1zM82 213h1v9h-1zM83 214h1v9h-1zM84 213h1v8h-1zM85 214h1v8h-1zM86 213h1v9h-1zM87 214h1v8h-1zM88 213h1v10h-1zM89 214h1v7h-1zM90 214h1v9h-1zM91 214h1v8h-1zM92 214h1v8h-1zM93 214h1v8h-1zM94 213h1v8h-1zM95 214h1v8h-1zM96 214h1v8h-1zM97 214h1v8h-1zM98 212h1v10h-1zM99 213h1v10h-1zM100 213h1v9h-1zM101 213h1v10h-1zM102 214h1v8h-1zM103 214h1v9h-1zM104 214h1v7h-1zM105 214h1v8h-1zM106 213h1v9h-1zM107 214h1v8h-1zM108 214h1v8h-1zM109 214h1v7h-1zM110 214h1v8h-1zM111 214h1v9h-1zM112 212h1v11h-1zM113 213h1v9h-1zM114 213h1v10h-1zM115 214h1v8h-1zM116 213h1v9h-1zM117 214h1v8h-1zM118 213h1v9h-1zM119 214h1v7h-1zM120 214h1v8h-1zM121 214h1v8h-1zM122 214h1v8h-1zM123 213h1v9h-1zM124 212h1v9h-1zM125 212h1v10h-1zM126 214h1v8h-1zM127 214h1v8h-1zM128 214h1v8h-1zM129 214h1v7h-1zM130 213h1v9h-1zM131 213h1v9h-1zM132 213h1v9h-1zM133 214h1v8h-1zM134 214h1v9h-1zM135 212h1v10h-1zM136 214h1v9h-1zM137 212h1v11h-1zM138 213h1v9h-1zM139 213h1v8h-1zM140 212h1v10h-1zM141 213h1v9h-1zM142 214h1v8h-1zM143 214h1v8h-1zM144 212h1v9h-1zM145 213h1v9h-1zM146 212h1v10h-1zM147 214h1v8h-1zM148 214h1v8h-1zM149 212h1v9h-1zM150 213h1v9h-1zM151 213h1v10h-1zM152 212h1v10h-1zM153 212h1v10h-1zM154 214h1v9h-1zM155 212h1v10h-1zM156 213h1v9h-1zM157 214h1v8h-1z" fill="#808000"/>
<rect x="158" y="206" width="1" height="28" fill="#808000"/>
<rect x="158" y="230" width="241" height="2" fill="#808000"/>
<rect x="399" y="230" width="1" height="10" fill="#808000"/>
<rect x="399" y="238" width="84" height="2" fill="#808000"/>
<rect x="483" y="213" width="1" height="27" fill="#808000"/>
<path d="M483 212h1v11h-1zM484 214h1v9h-1zM485 214h1v8h-1zM486 212h1v10h-1zM487 214h1v9h-1zM488 213h1v9h-1zM489 214h1v8h-1zM490 212h1v11h-1zM491 214h1v8h-1zM492 213h1v8h-1zM493 213h1v9h-1zM494 212h1v10h-1zM495 214h1v8h-1zM496 214h1v8h-1zM497 213h1v10h-1zM498 212h1v10h-1zM499 213h1v9h-1zM500 214h1v8h-1zM501 213h1v9h-1zM502 212h1v11h-1zM503 214h1v8h-1zM504 214h1v8h-1zM505 213h1v9h-1zM506 212h1v10h-1zM507 212h1v9h-1zM508 213h1v9h-1zM509 213h1v9h-1zM510 214h1v8h-1zM511 214h1v8h-1zM512 212h1v9h-1zM513 212h1v10h-1zM514 214h1v9h-1zM515 212h1v10h-1zM516 212h1v10h-1zM517 213h1v8h-1zM518 213h1v10h-1zM519 212h1v10h-1zM520 214h1v8h-1zM521 214h1v8h-1zM522 212h1v9h-1zM523 214h1v8h-1zM524 213h1v9h-1zM525 214h1v8h-1zM526 213h1v9h-1zM527 213h1v8h-1zM528 212h1v10h-1zM529 214h1v8h-1zM530 213h1v10h-1zM531 212h1v10h-1zM532 212h1v9h-1zM533 214h1v8h-1zM534 212h1v10h-1zM535 214h1v8h-1zM536 212h1v10h-1zM537 214h1v7h-1zM538 213h1v9h-1zM539 213h1v9h-1zM540 214h1v8h-1zM541 214h1v8h-1zM542 213h1v8h-1zM543 213h1v9h-1zM544 213h1v10h-1zM545 214h1v8h-1zM546 213h1v9h-1zM547 214h1v7h-1zM548 213h1v9h-1zM549 214h1v8h-1zM550 214h1v8h-1zM551 213h1v10h-1zM552 214h1v7h-1zM553 214h1v9h-1zM554 212h1v10h-1zM555 212h1v10h-1zM556 213h1v9h-1zM557 214h1v7h-1zM558 214h1v8h-1zM559 214h1v8h-1zM560 212h1v10h-1zM561 214h1v8h-1zM562 212h1v9h-1zM563 212h1v10h-1zM564 213h1v9h-1zM565 213h1v9h-1zM566 213h1v9h-1zM567 213h1v8h-1zM568 214h1v8h-1zM569 212h1v10h-1zM570 212h1v10h-1zM571 212h1v10h-1zM572 214h1v7h-1zM573 214h1v8h-1zM574 214h1v8h-1zM575 214h1v8h-1zM576 214h1v8h-1zM577 213h1v10h-1zM578 212h1v10h-1zM579 212h1v10h-1zM580 213h1v9h-1zM581 214h1v8h-1zM582 212h1v9h-1zM583 214h1v8h-1zM584 212h1v11h-1zM585 212h1v10h-1zM586 213h1v9h-1zM587 214h1v9h-1zM588 213h1v9h-1zM589 214h1v8h-1zM590 212h1v10h-1zM591 213h1v9h-1zM592 214h1v7h-1zM593 214h1v9h-1zM594 213h1v9h-1zM595 214h1v8h-1zM596 213h1v9h-1zM597 212h1v9h-1zM598 213h1v9h-1zM599 213h1v9h-1zM600 213h1v9h-1zM601 214h1v8h-1zM602 214h1v7h-1zM603 213h1v9h-1zM604 214h1v8h-1zM605 214h1v8h-1zM606 213h1v9h-1zM607 214h1v7h-1zM608 213h1v9h-1zM609 214h1v8h-1zM610 214h1v8h-1zM611 214h1v8h-1zM612 214h1v7h-1zM613 213h1v9h-1zM614 214h1v8h-1zM615 212h1v11h-1zM616 213h1v9h-1zM617 212h1v9h-1zM618 213h1v9h-1zM619 214h1v8h-1zM620 214h1v8h-1zM621 214h1v8h-1zM622 214h1v7h-1zM623 214h1v9h-1zM624 213h1v9h-1zM625 213h1v9h-1zM626 213h1v9h-1zM627 214h1v7h-1zM628 213h1v9h-1zM629 214h1v8h-1zM630 213h1v9h-1zM631 213h1v9h-1zM632 212h1v11h-1zM633 214h1v8h-1zM634 214h1v9h-1zM635 214h1v8h-1zM636 214h1v8h-1zM637 214h1v7h-1z" fill="#808000"/>
<rect x="638" y="206" width="1" height="28" fill="#808000"/>
<rect x="638" y="230" width="241" height="2" fill="#808000"/>
<rect x="879" y="230" width="1" height="10" fill="#808000"/>
<rect x="879" y="238" width="84" height="2" fill="#808000"/>
<path d="M965 212h1v10h-1zM966 213h1v9h-1zM967 212h1v10h-1zM968 214h1v8h-1zM969 214h1v7h-1zM970 213h1v9h-1zM971 213h1v9h-1zM972 214h1v9h-1zM973 213h1v10h-1zM974 213h1v10h-1zM975 214h1v8h-1zM976 214h1v8h-1zM977 212h1v10h-1zM978 213h1v9h-1zM979 213h1v8h-1zM980 212h1v10h-1zM981 213h1v9h-1zM982 214h1v8h-1zM983 212h1v10h-1zM984 214h1v7h-1zM985 214h1v8h-1zM986 214h1v8h-1zM987 212h1v10h-1zM988 214h1v8h-1zM989 214h1v7h-1zM990 214h1v9h-1zM991 212h1v10h-1zM992 214h1v8h-1zM993 214h1v9h-1zM994 214h1v7h-1zM995 213h1v9h-1zM996 213h1v9h-1zM997 213h1v9h-1zM998 214h1v8h-1zM999 212h1v9h-1zM1000 213h1v9h-1zM1001 214h1v8h-1zM1002 212h1v10h-1zM1003 214h1v8h-1zM1004 213h1v10h-1zM1005 213h1v9h-1zM1006 214h1v8h-1zM1007 213h1v10h-1zM1008 214h1v8h-1zM1009 212h1v9h-1zM1010 214h1v8h-1zM1011 212h1v10h-1zM1012 214h1v8h-1zM1013 214h1v8h-1zM1014 214h1v7h-1zM1015 213h1v9h-1zM1016 213h1v9h-1zM1017 213h1v9h-1zM1018 214h1v8h-1zM1019 214h1v7h-1zM1020 214h1v8h-1zM1021 214h1v9h-1zM1022 214h1v8h-1zM1023 213h1v10h-1zM1024 214h1v7h-1zM1025 214h1v9h-1zM1026 213h1v9h-1zM1027 213h1v9h-1zM1028 214h1v9h-1zM1029 214h1v7h-1zM1030 214h1v8h-1zM1031 213h1v9h-1zM1032 213h1v9h-1zM1033 213h1v9h-1zM1034 214h1v7h-1zM1035 212h1v11h-1zM1036 214h1v8h-1zM1037 213h1v9h-1zM1038 213h1v9h-1zM1039 214h1v7h-1zM1040 214h1v8h-1zM1041 214h1v8h-1zM1042 213h1v9h-1zM1043 214h1v8h-1zM1044 214h1v9h-1zM1045 214h1v8h-1zM1046 214h1v8h-1zM1047 213h1v9h-1zM1048 214h1v8h-1zM1049 213h1v10h-1zM1050 212h1v10h-1zM1051 214h1v8h-1zM1052 214h1v8h-1zM1053 214h1v9h-1zM1054 214h1v7h-1zM1055 214h1v8h-1zM1056 214h1v8h-1zM1057 214h1v9h-1zM1058 213h1v9h-1zM1059 213h1v8h-1zM1060 214h1v8h-1zM1061 214h1v8h-1zM1062 212h1v10h-1zM1063 213h1v9h-1zM1064 214h1v7h-1zM1065 214h1v8h-1zM1066 214h1v9h-1zM1067 213h1v9h-1zM1068 213h1v9h-1zM1069 213h1v10h-1zM1070 214h1v8h-1zM1071 214h1v8h-1zM1072 214h1v8h-1zM1073 213h1v9h-1zM1074 213h1v8h-1zM1075 214h1v9h-1zM1076 213h1v9h-1zM1077 214h1v8h-1zM1078 213h1v10h-1zM1079 214h1v7h-1zM1080 213h1v9h-1zM1081 213h1v9h-1zM1082 214h1v8h-1zM1083 213h1v9h-1zM1084 214h1v7h-1zM1085 214h1v8h-1zM1086 214h1v8h-1zM1087 213h1v9h-1zM1088 214h1v8h-1zM1089 214h1v7h-1zM1090 214h1v8h-1zM1091 213h1v9h-1zM1092 214h1v8h-1zM1093 214h1v9h-1zM1094 214h1v7h-1zM1095 214h1v8h-1zM1096 213h1v9h-1zM1097 213h1v9h-1zM1098 213h1v9h-1zM1099 214h1v7h-1zM1100 214h1v8h-1zM1101 214h1v8h-1zM1102 214h1v8h-1zM1103 213h1v9h-1zM1104 214h1v7h-1zM1105 214h1v8h-1zM1106 212h1v10h-1zM1107 214h1v8h-1zM1108 214h1v8h-1zM1109 214h1v7h-1zM1110 214h1v8h-1zM1111 213h1v9h-1zM1112 213h1v9h-1zM1113 214h1v8h-1zM1114 212h1v9h-1zM1115 213h1v9h-1zM1116 214h1v8h-1zM1117 213h1v9h-1z" fill="#808000"/>
<rect x="1118" y="206" width="1" height="28" fill="#808000"/>
<rect x="1118" y="230" width="152" height="2" fill="#808000"/>
<rect x="963" y="38" width="2" height="18" fill="#fff"/>
<rect x="963" y="62" width="2" height="18" fill="#fff"/>
<rect x="963" y="86" width="2" height="18" fill="#fff"/>
<rect x="963" y="110" width="2" height="18" fill="#fff"/>
<rect x="963" y="134" width="2" height="18" fill="#fff"/>
<rect x="963" y="158" width="2" height="18" fill="#fff"/>
<rect x="963" y="182" width="2" height="18" fill="#fff"/>
<rect x="963" y="206" width="2" height="18" fill="#fff"/>
<rect x="963" y="230" width="2" height="18" fill="#fff"/>
<rect x="963" y="254" width="2" height="18" fill="#fff"/>
<rect x="963" y="278" width="2" height="18" fill="#fff"/>
<rect x="963" y="302" width="2" height="14" fill="#fff"/>
<path d="M957.0 177H971.0L964 184Z" fill="#fff"/>
<rect x="962" y="169" width="3" height="8" fill="#fff"/>
<path d="M957.0 190H971.0L964 183Z" fill="#fff"/>
<rect x="962" y="190" width="3" height="10" fill="#fff"/>
<path d="M957.5 220H970.5L964 213Z" fill="#fff"/>
<rect x="962" y="220" width="3" height="7" fill="#fff"/>
<path d="M957.5 230H970.5L964 237Z" fill="#fff"/>
<rect x="962" y="223" width="3" height="7" fill="#fff"/>
<path d="M1271 162.5L1278 158.5V166.5Z" fill="#ffff00" shape-rendering="auto"/>
<rect x="1270" y="162" width="3" height="1" fill="#ffff00"/>
<path d="M1271 214.5L1278 210.5V218.5Z" fill="#ffff00" shape-rendering="auto"/>
<rect x="1270" y="214" width="3" height="1" fill="#ffff00"/>
<path d="M636 338H643L639.5 331Z" fill="#ffff00"/>
<rect x="639" y="330" width="1" height="3" fill="#ffff00"/>
<rect x="70" y="487" width="1200" height="1" fill="#ff0080"/>
<path d="M80 399h1v88h-1zM79 433h1v54h-1zM80 488h1v3h-1zM96 400h1v87h-1zM95 427h1v60h-1zM110 404h1v83h-1zM109 432h1v55h-1zM110 488h1v2h-1zM126 406h1v81h-1zM127 470h1v17h-1zM126 488h1v3h-1zM141 400h1v87h-1zM142 457h1v30h-1zM141 488h1v1h-1zM156 387h1v100h-1zM155 408h1v79h-1zM156 488h1v4h-1zM171 405h1v82h-1zM170 457h1v30h-1zM171 488h1v4h-1zM186 387h1v100h-1zM187 447h1v40h-1zM202 402h1v85h-1zM201 438h1v49h-1zM202 488h1v3h-1zM217 393h1v94h-1zM216 456h1v31h-1zM217 488h1v2h-1zM233 403h1v84h-1zM234 452h1v35h-1zM248 382h1v105h-1zM249 428h1v59h-1zM248 488h1v2h-1zM262 382h1v105h-1zM263 451h1v36h-1zM278 385h1v102h-1zM279 410h1v77h-1zM278 488h1v3h-1zM293 382h1v105h-1zM294 390h1v97h-1zM308 405h1v82h-1zM307 444h1v43h-1zM308 488h1v4h-1zM323 395h1v92h-1zM322 430h1v57h-1zM338 404h1v83h-1zM339 438h1v49h-1zM338 488h1v4h-1zM353 386h1v101h-1zM354 417h1v70h-1zM368 395h1v92h-1zM367 441h1v46h-1zM383 394h1v93h-1zM382 421h1v66h-1zM383 488h1v3h-1zM399 395h1v92h-1zM400 422h1v65h-1zM399 488h1v2h-1zM414 385h1v102h-1zM415 452h1v35h-1zM414 488h1v3h-1zM429 400h1v87h-1zM430 458h1v29h-1zM444 398h1v89h-1zM443 410h1v77h-1zM444 488h1v1h-1zM459 395h1v92h-1zM458 407h1v80h-1zM474 389h1v98h-1zM475 426h1v61h-1zM489 398h1v89h-1zM488 408h1v79h-1zM504 405h1v82h-1zM503 453h1v34h-1zM518 405h1v82h-1zM519 428h1v59h-1zM533 397h1v90h-1zM534 472h1v15h-1zM533 488h1v2h-1zM549 394h1v93h-1zM548 471h1v16h-1zM563 389h1v98h-1zM562 466h1v21h-1zM578 398h1v89h-1zM577 469h1v18h-1zM578 488h1v2h-1zM1054 380h1v107h-1zM1053 416h1v71h-1zM1054 488h1v2h-1zM1062 396h1v91h-1zM1063 405h1v82h-1zM1062 488h1v1h-1zM1069 384h1v103h-1zM1068 417h1v70h-1zM1076 390h1v97h-1zM1077 469h1v18h-1zM1076 488h1v3h-1zM1084 386h1v101h-1zM1083 482h1v5h-1zM1092 381h1v106h-1zM1093 458h1v29h-1zM1099 392h1v95h-1zM1100 452h1v35h-1zM1099 488h1v3h-1zM1106 381h1v106h-1zM1107 458h1v29h-1zM1106 488h1v2h-1zM1114 398h1v89h-1zM1115 455h1v32h-1zM1121 385h1v102h-1zM1120 411h1v76h-1zM1121 488h1v3h-1zM1128 381h1v106h-1zM1129 477h1v10h-1zM1136 394h1v93h-1zM1135 427h1v60h-1zM1136 488h1v1h-1zM1143 379h1v108h-1zM1142 478h1v9h-1zM1150 395h1v92h-1zM1151 474h1v13h-1zM1158 382h1v105h-1zM1159 446h1v41h-1zM1165 379h1v108h-1zM1164 460h1v27h-1zM1173 387h1v100h-1zM1174 477h1v10h-1zM1180 382h1v105h-1zM1181 465h1v22h-1zM1180 488h1v4h-1zM1188 392h1v95h-1zM1187 445h1v42h-1zM1188 488h1v3h-1zM1195 379h1v108h-1zM1196 465h1v22h-1zM1195 488h1v2h-1zM1202 393h1v94h-1zM1203 479h1v8h-1zM1202 488h1v4h-1zM1210 385h1v102h-1zM1211 437h1v50h-1zM1217 382h1v105h-1zM1216 408h1v79h-1zM1224 395h1v92h-1zM1225 470h1v17h-1zM1232 380h1v107h-1zM1231 455h1v32h-1zM1240 396h1v91h-1zM1239 434h1v53h-1zM1240 488h1v4h-1zM1247 381h1v106h-1zM1246 411h1v76h-1zM1247 488h1v3h-1zM1254 379h1v108h-1zM1253 441h1v46h-1zM1262 388h1v99h-1zM1263 428h1v59h-1zM1262 488h1v3h-1z" fill="#ff0080"/>
<rect x="592" y="399" width="2" height="88" fill="#ff0080"/>
<rect x="1046" y="404" width="1" height="83" fill="#ff0080"/>
<path d="M70 579h1v1h-1zM71 579h1v1h-1zM72 579h1v1h-1zM73 579h1v1h-1zM74 579h1v1h-1zM75 579h1v1h-1zM76 579h1v1h-1zM77 579h1v1h-1zM78 579h1v1h-1zM79 579h1v1h-1zM80 579h1v1h-1zM81 579h1v1h-1zM82 579h1v1h-1zM83 579h1v1h-1zM84 579h1v1h-1zM85 579h1v1h-1zM86 579h1v1h-1zM87 579h1v1h-1zM88 579h1v1h-1zM89 579h1v1h-1zM90 579h1v1h-1zM91 579h1v1h-1zM92 578h1v1h-1zM93 578h1v1h-1zM94 578h1v1h-1zM95 578h1v1h-1zM96 578h1v1h-1zM97 578h1v1h-1zM98 578h1v1h-1zM99 578h1v1h-1zM100 579h1v1h-1zM101 579h1v1h-1zM102 579h1v1h-1zM103 579h1v1h-1zM104 579h1v1h-1zM105 579h1v1h-1zM106 579h1v1h-1zM107 579h1v1h-1zM108 579h1v1h-1zM109 579h1v1h-1zM110 579h1v1h-1zM111 579h1v1h-1zM112 579h1v1h-1zM113 579h1v1h-1zM114 579h1v1h-1zM115 579h1v1h-1zM116 579h1v1h-1zM117 579h1v1h-1zM118 579h1v1h-1zM119 579h1v1h-1zM120 578h1v1h-1zM121 578h1v1h-1zM122 578h1v1h-1zM123 578h1v1h-1zM124 578h1v1h-1zM125 578h1v1h-1zM126 578h1v1h-1zM127 578h1v1h-1zM128 578h1v1h-1zM129 578h1v1h-1zM130 578h1v1h-1zM131 580h1v1h-1zM132 580h1v1h-1zM133 580h1v1h-1zM134 580h1v1h-1zM135 580h1v1h-1zM136 579h1v1h-1zM137 579h1v1h-1zM138 579h1v1h-1zM139 579h1v1h-1zM140 579h1v1h-1zM141 579h1v1h-1zM142 579h1v1h-1zM143 579h1v1h-1zM144 579h1v1h-1zM145 579h1v1h-1zM146 579h1v1h-1zM147 579h1v1h-1zM148 579h1v1h-1zM149 579h1v1h-1zM150 579h1v1h-1zM151 579h1v1h-1zM152 579h1v1h-1zM153 579h1v1h-1zM154 579h1v1h-1zM155 579h1v1h-1zM156 579h1v1h-1zM157 579h1v1h-1zM158 579h1v1h-1zM159 579h1v1h-1zM160 579h1v1h-1zM161 579h1v1h-1zM162 579h1v1h-1zM163 579h1v1h-1zM164 579h1v1h-1zM165 579h1v1h-1zM166 579h1v1h-1zM167 579h1v1h-1zM168 579h1v1h-1zM169 579h1v1h-1zM170 579h1v1h-1zM171 579h1v1h-1zM172 579h1v1h-1zM173 579h1v1h-1zM174 579h1v1h-1zM175 579h1v1h-1zM176 579h1v1h-1zM177 579h1v1h-1zM178 579h1v1h-1zM179 579h1v1h-1zM180 579h1v1h-1zM181 579h1v1h-1zM182 579h1v1h-1zM183 579h1v1h-1zM184 580h1v1h-1zM185 580h1v1h-1zM186 580h1v1h-1zM187 580h1v1h-1zM188 580h1v1h-1zM189 580h1v1h-1zM190 579h1v1h-1zM191 579h1v1h-1zM192 579h1v1h-1zM193 579h1v1h-1zM194 579h1v1h-1zM195 579h1v1h-1zM196 579h1v1h-1zM197 579h1v1h-1zM198 579h1v1h-1zM199 579h1v1h-1zM200 579h1v1h-1zM201 579h1v1h-1zM202 579h1v1h-1zM203 579h1v1h-1zM204 579h1v1h-1zM205 579h1v1h-1zM206 579h1v1h-1zM207 579h1v1h-1zM208 579h1v1h-1zM209 579h1v1h-1zM210 579h1v1h-1zM211 579h1v1h-1zM212 579h1v1h-1zM213 579h1v1h-1zM214 579h1v1h-1zM215 579h1v1h-1zM216 579h1v1h-1zM217 579h1v1h-1zM218 579h1v1h-1zM219 579h1v1h-1zM220 579h1v1h-1zM221 579h1v1h-1zM222 579h1v1h-1zM223 579h1v1h-1zM224 579h1v1h-1zM225 579h1v1h-1zM226 579h1v1h-1zM227 579h1v1h-1zM228 579h1v1h-1zM229 579h1v1h-1zM230 579h1v1h-1zM231 579h1v1h-1zM232 579h1v1h-1zM233 579h1v1h-1zM234 579h1v1h-1zM235 579h1v1h-1zM236 579h1v1h-1zM237 579h1v1h-1zM238 579h1v1h-1zM239 579h1v1h-1zM240 579h1v1h-1zM241 579h1v1h-1zM242 579h1v1h-1zM243 579h1v1h-1zM244 579h1v1h-1zM245 579h1v1h-1zM246 579h1v1h-1zM247 579h1v1h-1zM248 579h1v1h-1zM249 579h1v1h-1zM250 579h1v1h-1zM251 579h1v1h-1zM252 579h1v1h-1zM253 579h1v1h-1zM254 579h1v1h-1zM255 579h1v1h-1zM256 579h1v1h-1zM257 579h1v1h-1zM258 579h1v1h-1zM259 579h1v1h-1zM260 579h1v1h-1zM261 579h1v1h-1zM262 579h1v1h-1zM263 579h1v1h-1zM264 579h1v1h-1zM265 579h1v1h-1zM266 579h1v1h-1zM267 579h1v1h-1zM268 579h1v1h-1zM269 579h1v1h-1zM270 579h1v1h-1zM271 579h1v1h-1zM272 579h1v1h-1zM273 579h1v1h-1zM274 579h1v1h-1zM275 579h1v1h-1zM276 579h1v1h-1zM277 579h1v1h-1zM278 579h1v1h-1zM279 579h1v1h-1zM280 579h1v1h-1zM281 579h1v1h-1zM282 579h1v1h-1zM283 579h1v1h-1zM284 579h1v1h-1zM285 579h1v1h-1zM286 579h1v1h-1zM287 579h1v1h-1zM288 579h1v1h-1zM289 579h1v1h-1zM290 580h1v1h-1zM291 580h1v1h-1zM292 580h1v1h-1zM293 580h1v1h-1zM294 580h1v1h-1zM295 580h1v1h-1zM296 580h1v1h-1zM297 580h1v1h-1zM298 579h1v1h-1zM299 579h1v1h-1zM300 579h1v1h-1zM301 579h1v1h-1zM302 579h1v1h-1zM303 579h1v1h-1zM304 579h1v1h-1zM305 579h1v1h-1zM306 579h1v1h-1zM307 579h1v1h-1zM308 579h1v1h-1zM309 579h1v1h-1zM310 579h1v1h-1zM311 579h1v1h-1zM312 579h1v1h-1zM313 579h1v1h-1zM314 579h1v1h-1zM315 579h1v1h-1zM316 579h1v1h-1zM317 579h1v1h-1zM318 579h1v1h-1zM319 579h1v1h-1zM320 579h1v1h-1zM321 579h1v1h-1zM322 578h1v1h-1zM323 578h1v1h-1zM324 578h1v1h-1zM325 579h1v1h-1zM326 579h1v1h-1zM327 579h1v1h-1zM328 579h1v1h-1zM329 579h1v1h-1zM330 579h1v1h-1zM331 579h1v1h-1zM332 579h1v1h-1zM333 579h1v1h-1zM334 579h1v1h-1zM335 579h1v1h-1zM336 579h1v1h-1zM337 579h1v1h-1zM338 579h1v1h-1zM339 579h1v1h-1zM340 579h1v1h-1zM341 579h1v1h-1zM342 579h1v1h-1zM343 579h1v1h-1zM344 579h1v1h-1zM345 579h1v1h-1zM346 579h1v1h-1zM347 579h1v1h-1zM348 579h1v1h-1zM349 579h1v1h-1zM350 579h1v1h-1zM351 579h1v1h-1zM352 579h1v1h-1zM353 579h1v1h-1zM354 579h1v1h-1zM355 579h1v1h-1zM356 579h1v1h-1zM357 579h1v1h-1zM358 579h1v1h-1zM359 579h1v1h-1zM360 579h1v1h-1zM361 579h1v1h-1zM362 579h1v1h-1zM363 579h1v1h-1zM364 579h1v1h-1zM365 579h1v1h-1zM366 579h1v1h-1zM367 579h1v1h-1zM368 579h1v1h-1zM369 579h1v1h-1zM370 579h1v1h-1zM371 579h1v1h-1zM372 579h1v1h-1zM373 579h1v1h-1zM374 579h1v1h-1zM375 579h1v1h-1zM376 579h1v1h-1zM377 579h1v1h-1zM378 579h1v1h-1zM379 579h1v1h-1zM380 579h1v1h-1zM381 579h1v1h-1zM382 579h1v1h-1zM383 579h1v1h-1zM384 579h1v1h-1zM385 579h1v1h-1zM386 579h1v1h-1zM387 579h1v1h-1zM388 579h1v1h-1zM389 579h1v1h-1zM390 579h1v1h-1zM391 579h1v1h-1zM392 579h1v1h-1zM393 579h1v1h-1zM394 579h1v1h-1zM395 579h1v1h-1zM396 579h1v1h-1zM397 579h1v1h-1zM398 579h1v1h-1zM399 579h1v1h-1zM400 579h1v1h-1zM401 579h1v1h-1zM402 579h1v1h-1zM403 579h1v1h-1zM404 579h1v1h-1zM405 579h1v1h-1zM406 579h1v1h-1zM407 579h1v1h-1zM408 579h1v1h-1zM409 579h1v1h-1zM410 579h1v1h-1zM411 579h1v1h-1zM412 579h1v1h-1zM413 579h1v1h-1zM414 579h1v1h-1zM415 579h1v1h-1zM416 579h1v1h-1zM417 579h1v1h-1zM418 579h1v1h-1zM419 579h1v1h-1zM420 579h1v1h-1zM421 579h1v1h-1zM422 579h1v1h-1zM423 579h1v1h-1zM424 578h1v1h-1zM425 578h1v1h-1zM426 578h1v1h-1zM427 578h1v1h-1zM428 578h1v1h-1zM429 578h1v1h-1zM430 578h1v1h-1zM431 578h1v1h-1zM432 578h1v1h-1zM433 578h1v1h-1zM434 578h1v1h-1zM435 578h1v1h-1zM436 578h1v1h-1zM437 578h1v1h-1zM438 578h1v1h-1zM439 578h1v1h-1zM440 578h1v1h-1zM441 578h1v1h-1zM442 578h1v1h-1zM443 578h1v1h-1zM444 578h1v1h-1zM445 578h1v1h-1zM446 578h1v1h-1zM447 578h1v1h-1zM448 578h1v1h-1zM449 578h1v1h-1zM450 578h1v1h-1zM451 578h1v1h-1zM452 578h1v1h-1zM453 578h1v1h-1zM454 578h1v1h-1zM455 578h1v1h-1zM456 578h1v1h-1zM457 578h1v1h-1zM458 578h1v1h-1zM459 578h1v1h-1zM460 578h1v1h-1zM461 578h1v1h-1zM462 578h1v1h-1zM463 578h1v1h-1zM464 578h1v1h-1zM465 578h1v1h-1zM466 578h1v1h-1zM467 578h1v1h-1zM468 578h1v1h-1zM469 578h1v1h-1zM470 578h1v1h-1zM471 578h1v1h-1zM472 578h1v1h-1zM473 578h1v1h-1zM474 578h1v1h-1zM475 578h1v1h-1zM476 578h1v1h-1zM477 578h1v1h-1zM478 578h1v1h-1zM479 578h1v1h-1zM480 578h1v1h-1zM481 578h1v1h-1zM482 578h1v1h-1zM483 578h1v1h-1zM484 578h1v1h-1zM485 578h1v1h-1zM486 578h1v1h-1zM487 578h1v1h-1zM488 578h1v1h-1zM489 578h1v1h-1zM490 578h1v1h-1zM491 578h1v1h-1zM492 578h1v1h-1zM493 578h1v1h-1zM494 578h1v1h-1zM495 578h1v1h-1zM496 578h1v1h-1zM497 578h1v1h-1zM498 578h1v1h-1zM499 578h1v1h-1zM500 578h1v1h-1zM501 578h1v1h-1zM502 578h1v1h-1zM503 578h1v1h-1zM504 578h1v1h-1zM505 578h1v1h-1zM506 578h1v1h-1zM507 578h1v1h-1zM508 578h1v1h-1zM509 578h1v1h-1zM510 578h1v1h-1zM511 578h1v1h-1zM512 578h1v1h-1zM513 578h1v1h-1zM514 578h1v1h-1zM515 578h1v1h-1zM516 578h1v1h-1zM517 578h1v1h-1zM518 578h1v1h-1zM519 578h1v1h-1zM520 578h1v1h-1zM521 578h1v1h-1zM522 578h1v1h-1zM523 578h1v1h-1zM524 578h1v1h-1zM525 578h1v1h-1zM526 578h1v1h-1zM527 578h1v1h-1zM528 578h1v1h-1zM529 578h1v1h-1zM530 578h1v1h-1zM531 578h1v1h-1zM532 578h1v1h-1zM533 578h1v1h-1zM534 578h1v1h-1zM535 578h1v1h-1zM536 578h1v1h-1zM537 578h1v1h-1zM538 578h1v1h-1zM539 578h1v1h-1zM540 578h1v1h-1zM541 578h1v1h-1zM542 578h1v1h-1zM543 578h1v1h-1zM544 579h1v1h-1zM545 579h1v1h-1zM546 579h1v1h-1zM547 579h1v1h-1zM548 579h1v1h-1zM549 579h1v1h-1zM550 579h1v1h-1zM551 578h1v1h-1zM552 578h1v1h-1zM553 578h1v1h-1zM554 578h1v1h-1zM555 578h1v1h-1zM556 578h1v1h-1zM557 578h1v1h-1zM558 578h1v1h-1zM559 578h1v1h-1zM560 578h1v1h-1zM561 578h1v1h-1zM562 578h1v1h-1zM563 578h1v1h-1zM564 578h1v1h-1zM565 578h1v1h-1zM566 578h1v1h-1zM567 578h1v1h-1zM568 578h1v1h-1zM569 578h1v1h-1zM570 578h1v1h-1zM571 578h1v1h-1zM572 578h1v1h-1zM573 578h1v1h-1zM574 578h1v1h-1zM575 578h1v1h-1zM576 578h1v1h-1zM577 578h1v1h-1zM578 578h1v1h-1zM579 578h1v1h-1zM580 578h1v1h-1zM581 578h1v1h-1zM582 578h1v1h-1zM583 578h1v1h-1zM584 578h1v1h-1zM585 578h1v1h-1zM586 578h1v1h-1zM587 578h1v1h-1zM588 578h1v1h-1zM589 578h1v1h-1zM590 578h1v1h-1zM591 578h1v1h-1zM592 578h1v1h-1zM593 578h1v1h-1zM594 578h1v1h-1zM595 578h1v1h-1zM596 578h1v1h-1zM597 578h1v1h-1zM598 578h1v1h-1zM599 578h1v1h-1zM600 578h1v1h-1zM601 578h1v1h-1zM602 578h1v1h-1zM603 578h1v1h-1zM604 578h1v1h-1zM605 578h1v1h-1zM606 578h1v1h-1zM607 578h1v1h-1zM608 578h1v1h-1zM609 578h1v1h-1zM610 578h1v1h-1zM611 578h1v1h-1zM612 578h1v1h-1zM613 578h1v1h-1zM614 578h1v1h-1zM615 578h1v1h-1zM616 578h1v1h-1zM617 578h1v1h-1zM618 578h1v1h-1zM619 578h1v1h-1zM620 578h1v1h-1zM621 578h1v1h-1zM622 578h1v1h-1zM623 577h1v1h-1zM624 577h1v1h-1zM625 577h1v1h-1zM626 577h1v1h-1zM627 577h1v1h-1zM628 577h1v1h-1zM629 577h1v1h-1zM630 577h1v1h-1zM631 577h1v1h-1zM632 577h1v1h-1zM633 577h1v1h-1zM634 576h1v1h-1zM635 576h1v1h-1zM636 576h1v1h-1zM637 576h1v1h-1zM638 576h1v1h-1zM639 576h1v1h-1zM640 576h1v1h-1zM641 576h1v1h-1zM642 576h1v1h-1zM643 576h1v1h-1zM644 576h1v1h-1zM645 576h1v1h-1zM646 575h1v1h-1zM647 575h1v1h-1zM648 575h1v1h-1zM649 575h1v1h-1zM650 575h1v1h-1zM651 575h1v1h-1zM652 575h1v1h-1zM653 575h1v1h-1zM654 575h1v1h-1zM655 575h1v1h-1zM656 575h1v1h-1zM657 574h1v1h-1zM658 574h1v1h-1zM659 574h1v1h-1zM660 574h1v1h-1zM661 574h1v1h-1zM662 574h1v1h-1zM663 574h1v1h-1zM664 574h1v1h-1zM665 574h1v1h-1zM666 574h1v1h-1zM667 574h1v1h-1zM668 574h1v1h-1zM669 573h1v1h-1zM670 573h1v1h-1zM671 573h1v1h-1zM672 573h1v1h-1zM673 573h1v1h-1zM674 573h1v1h-1zM675 573h1v1h-1zM676 573h1v1h-1zM677 573h1v1h-1zM678 573h1v1h-1zM679 573h1v1h-1zM680 573h1v1h-1zM681 572h1v1h-1zM682 572h1v1h-1zM683 572h1v1h-1zM684 572h1v1h-1zM685 572h1v1h-1zM686 572h1v1h-1zM687 572h1v1h-1zM688 572h1v1h-1zM689 572h1v1h-1zM690 572h1v1h-1zM691 571h1v1h-1zM692 571h1v1h-1zM693 571h1v1h-1zM694 571h1v1h-1zM695 571h1v1h-1zM696 571h1v1h-1zM697 571h1v1h-1zM698 571h1v1h-1zM699 571h1v1h-1zM700 571h1v1h-1zM701 570h1v1h-1zM702 570h1v1h-1zM703 570h1v1h-1zM704 570h1v1h-1zM705 570h1v1h-1zM706 570h1v1h-1zM707 570h1v1h-1zM708 570h1v1h-1zM709 570h1v1h-1zM710 570h1v1h-1zM711 570h1v1h-1zM712 569h1v1h-1zM713 569h1v1h-1zM714 569h1v1h-1zM715 569h1v1h-1zM716 569h1v1h-1zM717 569h1v1h-1zM718 569h1v1h-1zM719 569h1v1h-1zM720 569h1v1h-1zM721 569h1v1h-1zM722 568h1v1h-1zM723 568h1v1h-1zM724 568h1v1h-1zM725 568h1v1h-1zM726 568h1v1h-1zM727 568h1v1h-1zM728 568h1v1h-1zM729 568h1v1h-1zM730 568h1v1h-1zM731 568h1v1h-1zM732 568h1v1h-1zM733 567h1v1h-1zM734 567h1v1h-1zM735 567h1v1h-1zM736 567h1v1h-1zM737 567h1v1h-1zM738 567h1v1h-1zM739 567h1v1h-1zM740 567h1v1h-1zM741 567h1v1h-1zM742 567h1v1h-1zM743 566h1v1h-1zM744 566h1v1h-1zM745 566h1v1h-1zM746 566h1v1h-1zM747 566h1v1h-1zM748 566h1v1h-1zM749 566h1v1h-1zM750 566h1v1h-1zM751 566h1v1h-1zM752 566h1v1h-1zM753 566h1v1h-1zM754 565h1v1h-1zM755 565h1v1h-1zM756 565h1v1h-1zM757 565h1v1h-1zM758 565h1v1h-1zM759 565h1v1h-1zM760 565h1v1h-1zM761 565h1v1h-1zM762 565h1v1h-1zM763 565h1v1h-1zM764 564h1v1h-1zM765 564h1v1h-1zM766 564h1v1h-1zM767 564h1v1h-1zM768 564h1v1h-1zM769 564h1v1h-1zM770 564h1v1h-1zM771 564h1v1h-1zM772 564h1v1h-1zM773 564h1v1h-1zM774 564h1v1h-1zM775 563h1v1h-1zM776 563h1v1h-1zM777 563h1v1h-1zM778 563h1v1h-1zM779 563h1v1h-1zM780 563h1v1h-1zM781 563h1v1h-1zM782 563h1v1h-1zM783 563h1v1h-1zM784 563h1v1h-1zM785 562h1v1h-1zM786 562h1v1h-1zM787 562h1v1h-1zM788 562h1v1h-1zM789 562h1v1h-1zM790 562h1v1h-1zM791 562h1v1h-1zM792 562h1v1h-1zM793 562h1v1h-1zM794 562h1v1h-1zM795 561h1v1h-1zM796 561h1v1h-1zM797 561h1v1h-1zM798 561h1v1h-1zM799 561h1v1h-1zM800 561h1v1h-1zM801 561h1v1h-1zM802 561h1v1h-1zM803 561h1v1h-1zM804 560h1v1h-1zM805 560h1v1h-1zM806 560h1v1h-1zM807 560h1v1h-1zM808 560h1v1h-1zM809 560h1v1h-1zM810 560h1v1h-1zM811 560h1v1h-1zM812 560h1v1h-1zM813 559h1v1h-1zM814 559h1v1h-1zM815 559h1v1h-1zM816 559h1v1h-1zM817 559h1v1h-1zM818 559h1v1h-1zM819 559h1v1h-1zM820 559h1v1h-1zM821 559h1v1h-1zM822 558h1v1h-1zM823 558h1v1h-1zM824 558h1v1h-1zM825 558h1v1h-1zM826 558h1v1h-1zM827 558h1v1h-1zM828 558h1v1h-1zM829 558h1v1h-1zM830 558h1v1h-1zM831 557h1v1h-1zM832 557h1v1h-1zM833 557h1v1h-1zM834 557h1v1h-1zM835 557h1v1h-1zM836 557h1v1h-1zM837 557h1v1h-1zM838 557h1v1h-1zM839 556h1v1h-1zM840 556h1v1h-1zM841 556h1v1h-1zM842 556h1v1h-1zM843 556h1v1h-1zM844 556h1v1h-1zM845 556h1v1h-1zM846 556h1v1h-1zM847 556h1v1h-1zM848 555h1v1h-1zM849 555h1v1h-1zM850 555h1v1h-1zM851 555h1v1h-1zM852 555h1v1h-1zM853 555h1v1h-1zM854 555h1v1h-1zM855 555h1v1h-1zM856 555h1v1h-1zM857 554h1v1h-1zM858 554h1v1h-1zM859 554h1v1h-1zM860 554h1v1h-1zM861 554h1v1h-1zM862 554h1v1h-1zM863 554h1v1h-1zM864 554h1v1h-1zM865 554h1v1h-1zM866 553h1v1h-1zM867 553h1v1h-1zM868 553h1v1h-1zM869 553h1v1h-1zM870 553h1v1h-1zM871 553h1v1h-1zM872 553h1v1h-1zM873 553h1v1h-1zM874 553h1v1h-1zM875 552h1v1h-1zM876 552h1v1h-1zM877 552h1v1h-1zM878 552h1v1h-1zM879 552h1v1h-1zM880 552h1v1h-1zM881 552h1v1h-1zM882 552h1v1h-1zM883 552h1v1h-1zM884 551h1v1h-1zM885 551h1v1h-1zM886 551h1v1h-1zM887 551h1v1h-1zM888 551h1v1h-1zM889 551h1v1h-1zM890 551h1v1h-1zM891 551h1v1h-1zM892 551h1v1h-1zM893 550h1v1h-1zM894 550h1v1h-1zM895 550h1v1h-1zM896 550h1v1h-1zM897 550h1v1h-1zM898 550h1v1h-1zM899 550h1v1h-1zM900 550h1v1h-1zM901 550h1v1h-1zM902 549h1v1h-1zM903 549h1v1h-1zM904 549h1v1h-1zM905 549h1v1h-1zM906 549h1v1h-1zM907 549h1v1h-1zM908 549h1v1h-1zM909 549h1v1h-1zM910 549h1v1h-1zM911 548h1v1h-1zM912 548h1v1h-1zM913 548h1v1h-1zM914 548h1v1h-1zM915 548h1v1h-1zM916 548h1v1h-1zM917 548h1v1h-1zM918 548h1v1h-1zM919 548h1v1h-1zM920 548h1v1h-1zM921 547h1v1h-1zM922 547h1v1h-1zM923 547h1v1h-1zM924 547h1v1h-1zM925 547h1v1h-1zM926 547h1v1h-1zM927 547h1v1h-1zM928 547h1v1h-1zM929 547h1v1h-1zM930 547h1v1h-1zM931 546h1v1h-1zM932 546h1v1h-1zM933 546h1v1h-1zM934 546h1v1h-1zM935 546h1v1h-1zM936 546h1v1h-1zM937 546h1v1h-1zM938 546h1v1h-1zM939 546h1v1h-1zM940 546h1v1h-1zM941 545h1v1h-1zM942 545h1v1h-1zM943 545h1v1h-1zM944 545h1v1h-1zM945 545h1v1h-1zM946 545h1v1h-1zM947 545h1v1h-1zM948 545h1v1h-1zM949 545h1v1h-1zM950 545h1v1h-1zM951 544h1v1h-1zM952 544h1v1h-1zM953 544h1v1h-1zM954 544h1v1h-1zM955 544h1v1h-1zM956 544h1v1h-1zM957 544h1v1h-1zM958 544h1v1h-1zM959 544h1v1h-1zM960 544h1v1h-1zM961 543h1v1h-1zM962 543h1v1h-1zM963 543h1v1h-1zM964 543h1v1h-1zM965 543h1v1h-1zM966 543h1v1h-1zM967 543h1v1h-1zM968 543h1v1h-1zM969 543h1v1h-1zM970 543h1v1h-1zM971 542h1v1h-1zM972 542h1v1h-1zM973 542h1v1h-1zM974 542h1v1h-1zM975 542h1v1h-1zM976 542h1v1h-1zM977 542h1v1h-1zM978 542h1v1h-1zM979 542h1v1h-1zM980 542h1v1h-1zM981 541h1v1h-1zM982 541h1v1h-1zM983 541h1v1h-1zM984 541h1v1h-1zM985 541h1v1h-1zM986 541h1v1h-1zM987 541h1v1h-1zM988 541h1v1h-1zM989 541h1v1h-1zM990 541h1v1h-1zM991 540h1v1h-1zM992 540h1v1h-1zM993 540h1v1h-1zM994 540h1v1h-1zM995 540h1v1h-1zM996 540h1v1h-1zM997 540h1v1h-1zM998 540h1v1h-1zM999 540h1v1h-1zM1000 540h1v1h-1zM1001 539h1v1h-1zM1002 539h1v1h-1zM1003 539h1v1h-1zM1004 539h1v1h-1zM1005 539h1v1h-1zM1006 539h1v1h-1zM1007 539h1v1h-1zM1008 539h1v1h-1zM1009 539h1v1h-1zM1010 539h1v1h-1zM1011 538h1v1h-1zM1012 538h1v1h-1zM1013 538h1v1h-1zM1014 538h1v1h-1zM1015 538h1v1h-1zM1016 538h1v1h-1zM1017 538h1v1h-1zM1018 538h1v1h-1zM1019 538h1v1h-1zM1020 538h1v1h-1zM1021 537h1v1h-1zM1022 537h1v1h-1zM1023 537h1v1h-1zM1024 537h1v1h-1zM1025 537h1v1h-1zM1026 537h1v1h-1zM1027 537h1v1h-1zM1028 537h1v1h-1zM1029 537h1v1h-1zM1030 537h1v1h-1zM1031 536h1v1h-1zM1032 536h1v1h-1zM1033 536h1v1h-1zM1034 536h1v1h-1zM1035 536h1v1h-1zM1036 536h1v1h-1zM1037 536h1v1h-1zM1038 536h1v1h-1zM1039 536h1v1h-1zM1040 536h1v1h-1zM1041 535h1v1h-1zM1042 535h1v1h-1zM1043 535h1v1h-1zM1044 535h1v1h-1zM1045 535h1v1h-1zM1046 535h1v1h-1zM1047 535h1v1h-1zM1048 535h1v1h-1zM1049 535h1v1h-1zM1050 535h1v1h-1zM1051 535h1v1h-1zM1052 535h1v1h-1zM1053 535h1v1h-1zM1054 535h1v1h-1zM1055 535h1v1h-1zM1056 535h1v1h-1zM1057 535h1v1h-1zM1058 535h1v1h-1zM1059 535h1v1h-1zM1060 535h1v1h-1zM1061 535h1v1h-1zM1062 535h1v1h-1zM1063 535h1v1h-1zM1064 535h1v1h-1zM1065 535h1v1h-1zM1066 535h1v1h-1zM1067 535h1v1h-1zM1068 535h1v1h-1zM1069 535h1v1h-1zM1070 535h1v1h-1zM1071 535h1v1h-1zM1072 535h1v1h-1zM1073 535h1v1h-1zM1074 535h1v1h-1zM1075 535h1v1h-1zM1076 535h1v1h-1zM1077 535h1v1h-1zM1078 535h1v1h-1zM1079 535h1v1h-1zM1080 535h1v1h-1zM1081 535h1v1h-1zM1082 535h1v1h-1zM1083 535h1v1h-1zM1084 535h1v1h-1zM1085 535h1v1h-1zM1086 535h1v1h-1zM1087 535h1v1h-1zM1088 535h1v1h-1zM1089 535h1v1h-1zM1090 535h1v1h-1zM1091 535h1v1h-1zM1092 535h1v1h-1zM1093 535h1v1h-1zM1094 535h1v1h-1zM1095 535h1v1h-1zM1096 535h1v1h-1zM1097 535h1v1h-1zM1098 535h1v1h-1zM1099 535h1v1h-1zM1100 535h1v1h-1zM1101 535h1v1h-1zM1102 536h1v1h-1zM1103 536h1v1h-1zM1104 536h1v1h-1zM1105 536h1v1h-1zM1106 536h1v1h-1zM1107 536h1v1h-1zM1108 536h1v1h-1zM1109 536h1v1h-1zM1110 536h1v1h-1zM1111 536h1v1h-1zM1112 536h1v1h-1zM1113 536h1v1h-1zM1114 536h1v1h-1zM1115 536h1v1h-1zM1116 537h1v1h-1zM1117 537h1v1h-1zM1118 537h1v1h-1zM1119 537h1v1h-1zM1120 537h1v1h-1zM1121 537h1v1h-1zM1122 537h1v1h-1zM1123 537h1v1h-1zM1124 537h1v1h-1zM1125 537h1v1h-1zM1126 537h1v1h-1zM1127 537h1v1h-1zM1128 537h1v1h-1zM1129 537h1v1h-1zM1130 538h1v1h-1zM1131 538h1v1h-1zM1132 538h1v1h-1zM1133 538h1v1h-1zM1134 538h1v1h-1zM1135 538h1v1h-1zM1136 538h1v1h-1zM1137 538h1v1h-1zM1138 538h1v1h-1zM1139 538h1v1h-1zM1140 538h1v1h-1zM1141 538h1v1h-1zM1142 538h1v1h-1zM1143 538h1v1h-1zM1144 539h1v1h-1zM1145 539h1v1h-1zM1146 539h1v1h-1zM1147 539h1v1h-1zM1148 539h1v1h-1zM1149 539h1v1h-1zM1150 539h1v1h-1zM1151 539h1v1h-1zM1152 539h1v1h-1zM1153 539h1v1h-1zM1154 539h1v1h-1zM1155 539h1v1h-1zM1156 540h1v1h-1zM1157 540h1v1h-1zM1158 540h1v1h-1zM1159 540h1v1h-1zM1160 540h1v1h-1zM1161 540h1v1h-1zM1162 540h1v1h-1zM1163 540h1v1h-1zM1164 540h1v1h-1zM1165 540h1v1h-1zM1166 540h1v1h-1zM1167 540h1v1h-1zM1168 541h1v1h-1zM1169 541h1v1h-1zM1170 541h1v1h-1zM1171 541h1v1h-1zM1172 541h1v1h-1zM1173 541h1v1h-1zM1174 541h1v1h-1zM1175 541h1v1h-1zM1176 541h1v1h-1zM1177 541h1v1h-1zM1178 541h1v1h-1zM1179 541h1v1h-1zM1180 542h1v1h-1zM1181 542h1v1h-1zM1182 542h1v1h-1zM1183 542h1v1h-1zM1184 542h1v1h-1zM1185 542h1v1h-1zM1186 542h1v1h-1zM1187 542h1v1h-1zM1188 542h1v1h-1zM1189 542h1v1h-1zM1190 542h1v1h-1zM1191 542h1v1h-1zM1192 543h1v1h-1zM1193 543h1v1h-1zM1194 543h1v1h-1zM1195 543h1v1h-1zM1196 543h1v1h-1zM1197 543h1v1h-1zM1198 543h1v1h-1zM1199 543h1v1h-1zM1200 543h1v1h-1zM1201 543h1v1h-1zM1202 543h1v1h-1zM1203 543h1v1h-1zM1204 544h1v1h-1zM1205 544h1v1h-1zM1206 544h1v1h-1zM1207 544h1v1h-1zM1208 544h1v1h-1zM1209 544h1v1h-1zM1210 544h1v1h-1zM1211 544h1v1h-1zM1212 544h1v1h-1zM1213 544h1v1h-1zM1214 544h1v1h-1zM1215 544h1v1h-1zM1216 545h1v1h-1zM1217 545h1v1h-1zM1218 545h1v1h-1zM1219 545h1v1h-1zM1220 545h1v1h-1zM1221 545h1v1h-1zM1222 545h1v1h-1zM1223 545h1v1h-1zM1224 545h1v1h-1zM1225 545h1v1h-1zM1226 545h1v1h-1zM1227 545h1v1h-1zM1228 546h1v1h-1zM1229 546h1v1h-1zM1230 546h1v1h-1zM1231 546h1v1h-1zM1232 546h1v1h-1zM1233 546h1v1h-1zM1234 546h1v1h-1zM1235 546h1v1h-1zM1236 546h1v1h-1zM1237 546h1v1h-1zM1238 546h1v1h-1zM1239 546h1v1h-1zM1240 547h1v1h-1zM1241 547h1v1h-1zM1242 547h1v1h-1zM1243 547h1v1h-1zM1244 547h1v1h-1zM1245 547h1v1h-1zM1246 547h1v1h-1zM1247 547h1v1h-1zM1248 547h1v1h-1zM1249 547h1v1h-1zM1250 547h1v1h-1zM1251 547h1v1h-1zM1252 548h1v1h-1zM1253 548h1v1h-1zM1254 548h1v1h-1zM1255 548h1v1h-1zM1256 548h1v1h-1zM1257 548h1v1h-1zM1258 548h1v1h-1zM1259 548h1v1h-1zM1260 548h1v1h-1zM1261 548h1v1h-1zM1262 548h1v1h-1zM1263 548h1v1h-1zM1264 549h1v1h-1zM1265 549h1v1h-1zM1266 549h1v1h-1zM1267 549h1v1h-1zM1268 549h1v1h-1zM1269 549h1v1h-1z" fill="#ffff00"/>
<rect x="592" y="363" width="2" height="9" fill="#fff"/>
<rect x="592" y="378" width="2" height="3" fill="#fff"/>
<rect x="592" y="387" width="2" height="9" fill="#fff"/>
<rect x="592" y="402" width="2" height="3" fill="#fff"/>
<rect x="592" y="411" width="2" height="9" fill="#fff"/>
<rect x="592" y="426" width="2" height="3" fill="#fff"/>
<rect x="592" y="435" width="2" height="9" fill="#fff"/>
<rect x="592" y="450" width="2" height="3" fill="#fff"/>
<rect x="592" y="459" width="2" height="9" fill="#fff"/>
<rect x="592" y="474" width="2" height="3" fill="#fff"/>
<rect x="592" y="483" width="2" height="9" fill="#fff"/>
<rect x="592" y="498" width="2" height="3" fill="#fff"/>
<rect x="592" y="507" width="2" height="9" fill="#fff"/>
<rect x="592" y="522" width="2" height="3" fill="#fff"/>
<rect x="592" y="531" width="2" height="9" fill="#fff"/>
<rect x="592" y="546" width="2" height="3" fill="#fff"/>
<rect x="592" y="555" width="2" height="9" fill="#fff"/>
<rect x="592" y="570" width="2" height="3" fill="#fff"/>
<rect x="592" y="579" width="2" height="9" fill="#fff"/>
<rect x="592" y="594" width="2" height="3" fill="#fff"/>
<rect x="592" y="603" width="2" height="9" fill="#fff"/>
<rect x="592" y="618" width="2" height="3" fill="#fff"/>
<rect x="592" y="627" width="2" height="9" fill="#fff"/>
<path d="M587.0 480H599.0L593 487Z" fill="#fff"/>
<rect x="592" y="473" width="3" height="7" fill="#fff"/>
<path d="M587.0 571H599.0L593 578Z" fill="#fff"/>
<rect x="592" y="554" width="3" height="17" fill="#fff"/>
<rect x="1046" y="363" width="1" height="18" fill="#fff"/>
<rect x="1046" y="387" width="1" height="18" fill="#fff"/>
<rect x="1046" y="411" width="1" height="18" fill="#fff"/>
<rect x="1046" y="435" width="1" height="18" fill="#fff"/>
<rect x="1046" y="459" width="1" height="18" fill="#fff"/>
<rect x="1046" y="483" width="1" height="18" fill="#fff"/>
<rect x="1046" y="507" width="1" height="18" fill="#fff"/>
<rect x="1046" y="531" width="1" height="18" fill="#fff"/>
<rect x="1046" y="555" width="1" height="18" fill="#fff"/>
<rect x="1046" y="579" width="1" height="18" fill="#fff"/>
<rect x="1046" y="603" width="1" height="18" fill="#fff"/>
<rect x="1046" y="627" width="1" height="9" fill="#fff"/>
<path d="M1040.5 493H1052.5L1046.5 487Z" fill="#fff"/>
<rect x="1045" y="493" width="3" height="7" fill="#fff"/>
<path d="M1040.5 541H1052.5L1046.5 535Z" fill="#fff"/>
<rect x="1045" y="541" width="3" height="7" fill="#fff"/>
<path d="M64.5 659.5H71.5M64.5 659.5L68 656M64.5 659.5L68 663" fill="none" stroke="#ff0080" stroke-width="1.3" shape-rendering="auto"/>
<path d="M55 171H69L70 172V181L69 182H55L54 181V172Z" fill="#ff0080" shape-rendering="auto"/>
<rect x="58" y="183" width="12" height="2" fill="#ff0080"/>
<rect x="58" y="183" width="2" height="3" fill="#ff0080"/>
<rect x="63" y="257" width="7" height="2" fill="#ffff00"/>
<path d="M56 474H69L70 475V484L69 485H56L55 484V475Z" fill="#ff0080" shape-rendering="auto"/>
<rect x="60" y="486" width="10" height="2" fill="#ff0080"/>
<rect x="60" y="486" width="2" height="3" fill="#ff0080"/>
<rect x="61" y="609" width="9" height="2" fill="#ffff00"/>
<rect x="61" y="609" width="2" height="3" fill="#ffff00"/></svg>
<div style="position:absolute;right:1214px;top:41px;font-size:12.5px;line-height:12.5px;color:#ff0080;font-weight:normal;white-space:pre;">20 V</div>
<div style="position:absolute;right:1214px;top:70px;font-size:12.5px;line-height:12.5px;color:#ff0080;font-weight:normal;white-space:pre;">15 V</div>
<div style="position:absolute;right:1214px;top:106px;font-size:12.5px;line-height:12.5px;color:#ff0080;font-weight:normal;white-space:pre;">10 V</div>
<div style="position:absolute;right:1214px;top:143px;font-size:12.5px;line-height:12.5px;color:#ff0080;font-weight:normal;white-space:pre;">5 V</div>
<div style="position:absolute;right:1214px;top:179px;font-size:12.5px;line-height:12.5px;color:#ff0080;font-weight:normal;white-space:pre;">0 V</div>
<div style="position:absolute;right:1214px;top:216px;font-size:12.5px;line-height:12.5px;color:#ff0080;font-weight:normal;white-space:pre;">-5 V</div>
<div style="position:absolute;right:1214px;top:252px;font-size:12.5px;line-height:12.5px;color:#ff0080;font-weight:normal;white-space:pre;">-10 V</div>
<div style="position:absolute;right:1214px;top:289px;font-size:12.5px;line-height:12.5px;color:#ff0080;font-weight:normal;white-space:pre;">-15 V</div>
<div style="position:absolute;right:1214px;top:318px;font-size:12.5px;line-height:12.5px;color:#ff0080;font-weight:normal;white-space:pre;">-20 V</div>
<div style="position:absolute;right:1214px;top:366px;font-size:12.5px;line-height:12.5px;color:#ff0080;font-weight:normal;white-space:pre;">10.18 V</div>
<div style="position:absolute;right:1214px;top:395px;font-size:12.5px;line-height:12.5px;color:#ff0080;font-weight:normal;white-space:pre;">7.18 V</div>
<div style="position:absolute;right:1214px;top:431px;font-size:12.5px;line-height:12.5px;color:#ff0080;font-weight:normal;white-space:pre;">4.18 V</div>
<div style="position:absolute;right:1214px;top:468px;font-size:12.5px;line-height:12.5px;color:#ff0080;font-weight:normal;white-space:pre;">1.18 V</div>
<div style="position:absolute;right:1214px;top:504px;font-size:12.5px;line-height:12.5px;color:#ff0080;font-weight:normal;white-space:pre;">-1.82 V</div>
<div style="position:absolute;right:1214px;top:541px;font-size:12.5px;line-height:12.5px;color:#ff0080;font-weight:normal;white-space:pre;">-4.82 V</div>
<div style="position:absolute;right:1214px;top:577px;font-size:12.5px;line-height:12.5px;color:#ff0080;font-weight:normal;white-space:pre;">-7.82 V</div>
<div style="position:absolute;right:1214px;top:614px;font-size:12.5px;line-height:12.5px;color:#ff0080;font-weight:normal;white-space:pre;">-10.82 V</div>
<div style="position:absolute;right:1214px;top:643px;font-size:12.5px;line-height:12.5px;color:#ff0080;font-weight:normal;white-space:pre;">-13.82 V</div>
<div style="position:absolute;left:70px;top:334px;font-size:12px;line-height:12px;color:#ff0080;font-weight:normal;white-space:pre;">-237 ms</div>
<div style="position:absolute;left:-9px;width:400px;text-align:center;top:334px;font-size:12px;line-height:12px;color:#ff0080;font-weight:normal;white-space:pre;">-187 ms</div>
<div style="position:absolute;left:111px;width:400px;text-align:center;top:334px;font-size:12px;line-height:12px;color:#ff0080;font-weight:normal;white-space:pre;">-137 ms</div>
<div style="position:absolute;left:231px;width:400px;text-align:center;top:334px;font-size:12px;line-height:12px;color:#ff0080;font-weight:normal;white-space:pre;">-87 ms</div>
<div style="position:absolute;left:351px;width:400px;text-align:center;top:334px;font-size:12px;line-height:12px;color:#ff0080;font-weight:normal;white-space:pre;">-37 ms</div>
<div style="position:absolute;left:471px;width:400px;text-align:center;top:334px;font-size:12px;line-height:12px;color:#ff0080;font-weight:normal;white-space:pre;">13 ms</div>
<div style="position:absolute;left:591px;width:400px;text-align:center;top:334px;font-size:12px;line-height:12px;color:#ff0080;font-weight:normal;white-space:pre;">63 ms</div>
<div style="position:absolute;left:711px;width:400px;text-align:center;top:334px;font-size:12px;line-height:12px;color:#ff0080;font-weight:normal;white-space:pre;">113 ms</div>
<div style="position:absolute;left:831px;width:400px;text-align:center;top:334px;font-size:12px;line-height:12px;color:#ff0080;font-weight:normal;white-space:pre;">163 ms</div>
<div style="position:absolute;left:951px;width:400px;text-align:center;top:334px;font-size:12px;line-height:12px;color:#ff0080;font-weight:normal;white-space:pre;">213 ms</div>
<div style="position:absolute;right:9px;top:334px;font-size:12px;line-height:12px;color:#ff0080;font-weight:normal;white-space:pre;">263 ms</div>
<div style="position:absolute;left:71px;top:659px;font-size:12px;line-height:12px;color:#ff0080;font-weight:normal;white-space:pre;">134.236 ms</div>
<div style="position:absolute;left:111px;width:400px;text-align:center;top:659px;font-size:12px;line-height:12px;color:#ff0080;font-weight:normal;white-space:pre;">134.628 ms</div>
<div style="position:absolute;left:351px;width:400px;text-align:center;top:659px;font-size:12px;line-height:12px;color:#ff0080;font-weight:normal;white-space:pre;">135.02 ms</div>
<div style="position:absolute;left:591px;width:400px;text-align:center;top:659px;font-size:12px;line-height:12px;color:#ff0080;font-weight:normal;white-space:pre;">135.412 ms</div>
<div style="position:absolute;left:831px;width:400px;text-align:center;top:659px;font-size:12px;line-height:12px;color:#ff0080;font-weight:normal;white-space:pre;">135.804 ms</div>
<div style="position:absolute;right:9px;top:659px;font-size:12px;line-height:12px;color:#ff0080;font-weight:normal;white-space:pre;">136.196 ms</div>
<div style="position:absolute;left:57px;top:172px;font-size:9.5px;line-height:9.5px;color:#000;font-weight:normal;white-space:pre;">C2</div>
<div style="position:absolute;left:58px;top:475px;font-size:9.5px;line-height:9.5px;color:#000;font-weight:normal;white-space:pre;">Z2</div>
<div style="position:absolute;left:57px;top:246px;font-size:10px;line-height:10px;color:#ffff00;font-weight:normal;white-space:pre;">C1</div>
<div style="position:absolute;left:58px;top:598px;font-size:10px;line-height:10px;color:#ffff00;font-weight:normal;white-space:pre;">Z1</div>
<div style="position:absolute;left:957px;top:317px;font-size:11px;line-height:11px;color:#fff;font-weight:bold;white-space:pre;">C2</div>
<div style="position:absolute;left:586px;top:642px;font-size:11px;line-height:11px;color:#fff;font-weight:bold;white-space:pre;">Z2</div>
<div style="position:absolute;left:1040px;top:642px;font-size:11px;line-height:11px;color:#fff;font-weight:bold;white-space:pre;">Z2</div>
<div style="position:absolute;left:4px;top:687px;width:97px;height:16px;background:#ffff00"></div>
<div style="position:absolute;left:4px;top:703px;width:97px;height:78px;background:#444444"></div>
<div style="position:absolute;left:7px;top:689px;font-size:13px;line-height:14px;color:#000">C1</div>
<div style="position:absolute;left:80px;top:688px;width:18px;height:14px;background:#000;border-radius:2px;color:#ffff00;font-size:12px;line-height:12px;text-align:center">D1</div>
<div style="position:absolute;left:67px;top:688px;width:11px;height:14px;background:#000;border-radius:2px;color:#ffff00;font-size:12px;line-height:12px;text-align:center">B</div>
<div style="position:absolute;left:54px;top:688px;width:11px;height:14px;background:#000;border-radius:2px;color:#ffff00;font-size:12px;line-height:12px;text-align:center">F</div>
<div style="position:absolute;right:1180px;top:706px;font-size:13px;line-height:14px;color:#fff;white-space:pre">2.00 V/div</div>
<div style="position:absolute;right:1180px;top:720.7px;font-size:13px;line-height:14px;color:#fff;white-space:pre">-4.05000 V</div>
<div style="position:absolute;left:7px;top:737px"><svg width="8" height="13" style="position:relative;left:0px;top:0px;display:block"><path d="M3.5 0V12M0.5 9.5L3.5 12.5L6.5 9.5" fill="none" stroke="#d8d8b8" stroke-width="1"/></svg></div>
<div style="position:absolute;right:1180px;top:735.3px;font-size:13px;line-height:14px;color:#fff;white-space:pre">1.03050 V</div>
<div style="position:absolute;left:7px;top:752px"><svg width="8" height="13" style="position:relative;left:0px;top:0px;display:block"><path d="M3.5 13V1M0.5 3.5L3.5 0.5L6.5 3.5" fill="none" stroke="#d8d8b8" stroke-width="1"/></svg></div>
<div style="position:absolute;right:1180px;top:750px;font-size:13px;line-height:14px;color:#fff;white-space:pre">2.44675 V</div>
<div style="position:absolute;left:7px;top:764.6px;font-size:13px;line-height:14px;color:#fff">&#916;y</div>
<div style="position:absolute;right:1180px;top:764.6px;font-size:13px;line-height:14px;color:#fff;white-space:pre">1.41625 V</div><div style="position:absolute;left:104px;top:687px;width:97px;height:16px;background:#ff0080"></div>
<div style="position:absolute;left:104px;top:703px;width:97px;height:78px;background:#444444"></div>
<div style="position:absolute;left:107px;top:689px;font-size:13px;line-height:14px;color:#000">C2</div>
<div style="position:absolute;left:180px;top:688px;width:18px;height:14px;background:#000;border-radius:2px;color:#ff0080;font-size:12px;line-height:12px;text-align:center">D1</div>
<div style="position:absolute;left:167px;top:688px;width:11px;height:14px;background:#000;border-radius:2px;color:#ff0080;font-size:12px;line-height:12px;text-align:center">B</div>
<div style="position:absolute;left:154px;top:688px;width:11px;height:14px;background:#000;border-radius:2px;color:#ff0080;font-size:12px;line-height:12px;text-align:center">F</div>
<div style="position:absolute;right:1080px;top:706px;font-size:13px;line-height:14px;color:#fff;white-space:pre">5.00 V/div</div>
<div style="position:absolute;right:1080px;top:720.7px;font-size:13px;line-height:14px;color:#fff;white-space:pre">0.0 mV ofst</div>
<div style="position:absolute;left:107px;top:737px"><svg width="8" height="13" style="position:relative;left:0px;top:0px;display:block"><path d="M3.5 0V12M0.5 9.5L3.5 12.5L6.5 9.5" fill="none" stroke="#d8d8b8" stroke-width="1"/></svg></div>
<div style="position:absolute;right:1080px;top:735.3px;font-size:13px;line-height:14px;color:#fff;white-space:pre">-57.5 mV</div>
<div style="position:absolute;left:107px;top:752px"><svg width="8" height="13" style="position:relative;left:0px;top:0px;display:block"><path d="M3.5 13V1M0.5 3.5L3.5 0.5L6.5 3.5" fill="none" stroke="#d8d8b8" stroke-width="1"/></svg></div>
<div style="position:absolute;right:1080px;top:750px;font-size:13px;line-height:14px;color:#fff;white-space:pre">-20.0 mV</div>
<div style="position:absolute;left:107px;top:764.6px;font-size:13px;line-height:14px;color:#fff">&#916;y</div>
<div style="position:absolute;right:1080px;top:764.6px;font-size:13px;line-height:14px;color:#fff;white-space:pre">37.5 mV</div><div style="position:absolute;left:204px;top:687px;width:97px;height:16px;background:#ffff00"></div>
<div style="position:absolute;left:204px;top:703px;width:97px;height:78px;background:#444444"></div>
<div style="position:absolute;left:204px;top:781px;width:98px;height:1px;background:#00e000"></div>
<div style="position:absolute;left:207px;top:689px;font-size:13px;line-height:14px;color:#000">Z1</div>
<div style="position:absolute;right:980px;top:689px;font-size:13px;line-height:14px;color:#000">zoom(C1)</div>
<div style="position:absolute;right:980px;top:706px;font-size:13px;line-height:14px;color:#fff;white-space:pre">1.20 V/div</div>
<div style="position:absolute;right:980px;top:720.7px;font-size:13px;line-height:14px;color:#fff;white-space:pre">196 &#956;s/div</div>
<div style="position:absolute;left:207px;top:737px"><svg width="8" height="13" style="position:relative;left:0px;top:0px;display:block"><path d="M3.5 0V12M0.5 9.5L3.5 12.5L6.5 9.5" fill="none" stroke="#d8d8b8" stroke-width="1"/></svg></div>
<div style="position:absolute;right:980px;top:735.3px;font-size:13px;line-height:14px;color:#fff;white-space:pre">1.03050 V</div>
<div style="position:absolute;left:207px;top:752px"><svg width="8" height="13" style="position:relative;left:0px;top:0px;display:block"><path d="M3.5 13V1M0.5 3.5L3.5 0.5L6.5 3.5" fill="none" stroke="#d8d8b8" stroke-width="1"/></svg></div>
<div style="position:absolute;right:980px;top:750px;font-size:13px;line-height:14px;color:#fff;white-space:pre">2.44675 V</div>
<div style="position:absolute;left:207px;top:764.6px;font-size:13px;line-height:14px;color:#fff">&#916;y</div>
<div style="position:absolute;right:980px;top:764.6px;font-size:13px;line-height:14px;color:#fff;white-space:pre">1.41625 V</div><div style="position:absolute;left:304px;top:687px;width:97px;height:16px;background:#ff0080"></div>
<div style="position:absolute;left:304px;top:703px;width:97px;height:78px;background:#2c4e69"></div>
<div style="position:absolute;left:303px;top:686px;width:99px;height:95px;box-sizing:border-box;border-style:solid;border-color:#1a8cff;border-width:1px 2px 2px 2px"></div>
<div style="position:absolute;left:304px;top:781px;width:98px;height:1px;background:#00e000"></div>
<div style="position:absolute;left:307px;top:689px;font-size:13px;line-height:14px;color:#000">Z2</div>
<div style="position:absolute;right:880px;top:689px;font-size:13px;line-height:14px;color:#000">zoom(C2)</div>
<div style="position:absolute;right:880px;top:706px;font-size:13px;line-height:14px;color:#fff;white-space:pre">3.00 V/div</div>
<div style="position:absolute;right:880px;top:720.7px;font-size:13px;line-height:14px;color:#fff;white-space:pre">196 &#956;s/div</div>
<div style="position:absolute;left:307px;top:737px"><svg width="8" height="13" style="position:relative;left:0px;top:0px;display:block"><path d="M3.5 0V12M0.5 9.5L3.5 12.5L6.5 9.5" fill="none" stroke="#d8d8b8" stroke-width="1"/></svg></div>
<div style="position:absolute;right:880px;top:735.3px;font-size:13px;line-height:14px;color:#fff;white-space:pre">-57.5 mV</div>
<div style="position:absolute;left:307px;top:752px"><svg width="8" height="13" style="position:relative;left:0px;top:0px;display:block"><path d="M3.5 13V1M0.5 3.5L3.5 0.5L6.5 3.5" fill="none" stroke="#d8d8b8" stroke-width="1"/></svg></div>
<div style="position:absolute;right:880px;top:750px;font-size:13px;line-height:14px;color:#fff;white-space:pre">-20.0 mV</div>
<div style="position:absolute;left:307px;top:764.6px;font-size:13px;line-height:14px;color:#fff">&#916;y</div>
<div style="position:absolute;right:880px;top:764.6px;font-size:13px;line-height:14px;color:#fff;white-space:pre">37.5 mV</div><svg width="100" height="96" style="position:absolute;left:402px;top:685px" shape-rendering="crispEdges"><rect x="2.5" y="2.5" width="96" height="93" fill="none" stroke="#3a3a3a"/><rect x="2.5" y="2.5" width="96" height="93" fill="none" stroke="#f0f0f0" stroke-dasharray="3 3"/></svg><div style="position:absolute;left:444px;top:733px;width:14px;height:2px;background:#fff"></div><div style="position:absolute;left:450px;top:727px;width:2px;height:14px;background:#fff"></div><div style="position:absolute;left:1004px;top:687px;width:56px;height:15px;background:#00ee00"></div><div style="position:absolute;left:1004px;top:702px;width:56px;height:34px;background:#444444"></div><div style="position:absolute;left:1004px;top:688px;width:56px;text-align:center;font-size:13px;line-height:14px;color:#000;font-weight:bold">HD</div><div style="position:absolute;left:1004px;top:712px;width:56px;text-align:center;font-size:13px;line-height:14px;color:#fff">12 Bits</div><div style="position:absolute;left:1063px;top:687px;width:112px;height:15px;background:#444444"></div><div style="position:absolute;left:1064px;top:687px;width:110px;height:15px;background:#f8f8f8"></div><div style="position:absolute;left:1063px;top:702px;width:112px;height:34px;background:#444444"></div><div style="position:absolute;left:1066px;top:689px;font-size:13px;line-height:14px;color:#000">Tbase</div><div style="position:absolute;right:107px;top:689px;font-size:13px;line-height:14px;color:#000">-13 ms</div><div style="position:absolute;right:107px;top:706px;font-size:13px;line-height:14px;color:#fff">50.0 ms/div</div><div style="position:absolute;left:1066px;top:721px;font-size:13px;line-height:14px;color:#fff">2.5 MS</div><div style="position:absolute;right:107px;top:721px;font-size:13px;line-height:14px;color:#fff">5 MS/s</div><div style="position:absolute;left:1178px;top:687px;width:97px;height:15px;background:#444444"></div><div style="position:absolute;left:1179px;top:687px;width:95px;height:15px;background:#f8f8f8"></div><div style="position:absolute;left:1178px;top:702px;width:97px;height:34px;background:#444444"></div><div style="position:absolute;left:1181px;top:689px;font-size:13px;line-height:14px;color:#000">Trigger</div><div style="position:absolute;left:1229px;top:688px;width:18px;height:13px;background:#000;border-radius:3px;color:#fff;font-size:11px;line-height:13px;text-align:center">C1</div><div style="position:absolute;left:1251px;top:688px;width:22px;height:13px;background:#000;border-radius:3px;color:#fff;font-size:11px;line-height:13px;text-align:center">DC</div><div style="position:absolute;left:1181px;top:706px;font-size:13px;line-height:14px;color:#fff">Stop</div><div style="position:absolute;right:7px;top:706px;font-size:13px;line-height:14px;color:#fff">2.42 V</div><div style="position:absolute;left:1181px;top:721px;font-size:13px;line-height:14px;color:#fff">SlewRate</div><div style="position:absolute;right:7px;top:721px;font-size:13px;line-height:14px;color:#fff">Pos</div><div style="position:absolute;left:1009px;top:738px;font-size:13px;line-height:14px;color:#fff">X1=</div><div style="position:absolute;left:1042px;top:738px;font-size:13px;line-height:14px;color:#fff">135.0894 ms</div><div style="position:absolute;right:120px;top:738px;font-size:13px;line-height:14px;color:#fff">&#916;X=</div><div style="position:absolute;right:45px;top:738px;font-size:13px;line-height:14px;color:#fff">740.8 &#956;s</div><div style="position:absolute;left:1009px;top:754px;font-size:13px;line-height:14px;color:#fff">X2=</div><div style="position:absolute;left:1042px;top:754px;font-size:13px;line-height:14px;color:#fff">135.8302 ms</div><div style="position:absolute;right:120px;top:754px;font-size:13px;line-height:14px;color:#fff">1/&#916;X=</div><div style="position:absolute;right:45px;top:754px;font-size:13px;line-height:14px;color:#fff">1.3499 kHz</div>
<div style="position:absolute;left:0;top:782px;width:1280px;height:18px;background:#242424"></div><div style="position:absolute;left:0;top:783px;width:1280px;height:1px;background:#5c6664"></div><div style="position:absolute;left:1129px;top:782px;width:134px;height:18px;background:#232323"></div><div style="position:absolute;left:1263px;top:782px;width:1px;height:18px;background:#000"></div><div style="position:absolute;left:1130px;top:785px;font-size:13px;line-height:14px;color:#fff">11/13/2023 5:13:04 AM</div><div style="position:absolute;left:7px;top:785px;font-size:16px;line-height:16px;color:#f2f2f2;font-weight:bold;transform:scaleX(0.775);transform-origin:0 0">TELEDYNE</div><div style="position:absolute;left:77px;top:785px;font-size:16px;line-height:16px;color:#c8c8c8;transform:scaleX(0.69);transform-origin:0 0">LECROY</div>
</body></html>
